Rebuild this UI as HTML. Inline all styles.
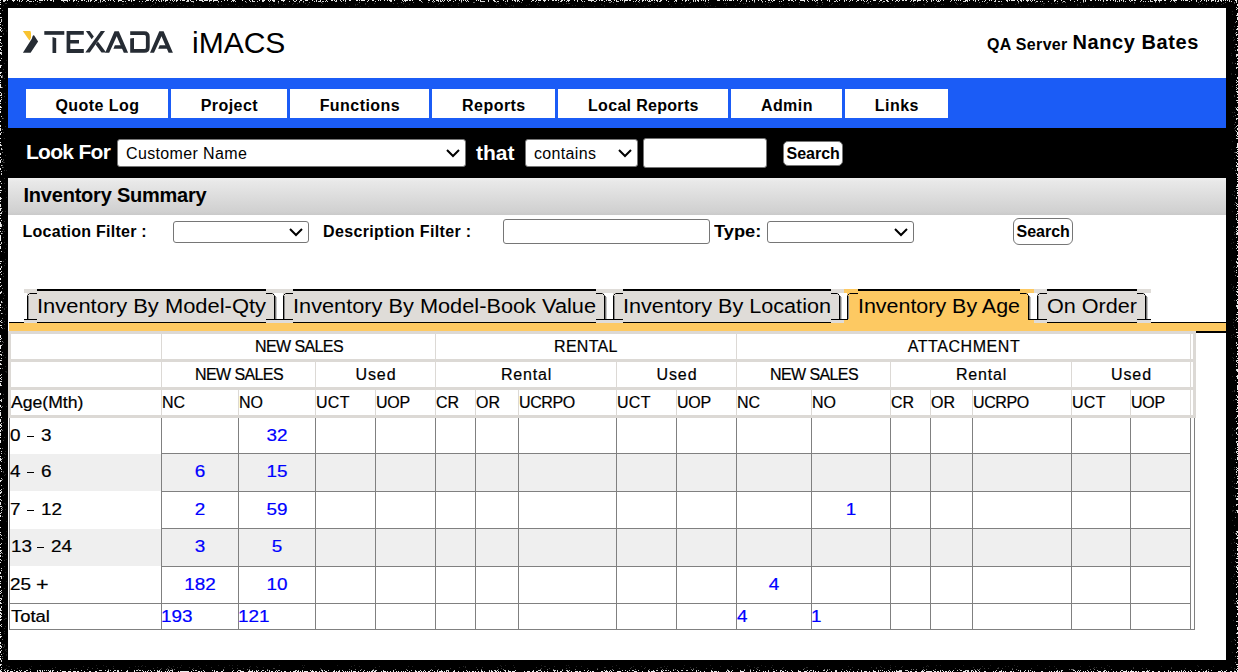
<!DOCTYPE html>
<html><head><meta charset="utf-8"><title>iMACS Inventory Summary</title><style>html,body{margin:0;padding:0;width:1238px;height:672px;overflow:hidden;background:#000;position:relative}
.a{position:absolute}
.t{position:absolute;white-space:nowrap;font-family:"Liberation Sans",sans-serif}
.s{-webkit-text-stroke:0.2px currentColor}
svg{position:absolute;left:0;top:0}
</style></head>
<body>
<div class="a" style="left:8px;top:8px;width:1218px;height:652px;background:#fff;"></div>
<div class="t" style="left:192px;top:27.61px;font-size:30px;line-height:30px;font-weight:400;color:#000;">iMACS</div>
<div class="t" style="left:987px;top:37.26px;font-size:16px;line-height:16px;font-weight:700;color:#000;letter-spacing:0.33px;">QA Server</div>
<div class="t" style="left:1072.5px;top:31.87px;font-size:20px;line-height:20px;font-weight:700;color:#000;letter-spacing:0.58px;">Nancy Bates</div>
<div class="a" style="left:8px;top:78px;width:1218px;height:50px;background:#1b5cf6;"></div>
<div class="a" style="left:26px;top:89px;width:142px;height:29px;background:#fff;"></div>
<div class="t" style="left:-102.6px;width:400px;text-align:center;top:98.06px;font-size:16px;line-height:16px;font-weight:700;color:#000;letter-spacing:0.45px;">Quote Log</div>
<div class="a" style="left:171px;top:89px;width:116px;height:29px;background:#fff;"></div>
<div class="t" style="left:29.400000000000006px;width:400px;text-align:center;top:98.06px;font-size:16px;line-height:16px;font-weight:700;color:#000;letter-spacing:0.45px;">Project</div>
<div class="a" style="left:290px;top:89px;width:139px;height:29px;background:#fff;"></div>
<div class="t" style="left:159.89999999999998px;width:400px;text-align:center;top:98.06px;font-size:16px;line-height:16px;font-weight:700;color:#000;letter-spacing:0.45px;">Functions</div>
<div class="a" style="left:432px;top:89px;width:123px;height:29px;background:#fff;"></div>
<div class="t" style="left:293.9px;width:400px;text-align:center;top:98.06px;font-size:16px;line-height:16px;font-weight:700;color:#000;letter-spacing:0.45px;">Reports</div>
<div class="a" style="left:558px;top:89px;width:170px;height:29px;background:#fff;"></div>
<div class="t" style="left:443.4px;width:400px;text-align:center;top:98.06px;font-size:16px;line-height:16px;font-weight:700;color:#000;letter-spacing:0.31px;">Local Reports</div>
<div class="a" style="left:731px;top:89px;width:111px;height:29px;background:#fff;"></div>
<div class="t" style="left:586.9px;width:400px;text-align:center;top:98.06px;font-size:16px;line-height:16px;font-weight:700;color:#000;letter-spacing:0.45px;">Admin</div>
<div class="a" style="left:845px;top:89px;width:103px;height:29px;background:#fff;"></div>
<div class="t" style="left:696.9px;width:400px;text-align:center;top:98.06px;font-size:16px;line-height:16px;font-weight:700;color:#000;letter-spacing:0.45px;">Links</div>
<div class="a" style="left:8px;top:128px;width:1218px;height:50px;background:#000;"></div>
<div class="t" style="left:26px;top:140.72px;font-size:21px;line-height:21px;font-weight:700;color:#fff;letter-spacing:-0.71px;">Look For</div>
<div class="a" style="left:117px;top:139px;width:347px;height:26px;background:#fff;border:1px solid #767676;border-radius:3px"></div>
<div class="t" style="left:126px;top:146.46px;font-size:16px;line-height:16px;font-weight:400;color:#000;letter-spacing:0.36px;">Customer Name</div>
<div class="t" style="left:476px;top:142.02px;font-size:21px;line-height:21px;font-weight:700;color:#fff;">that</div>
<div class="a" style="left:525px;top:139px;width:111px;height:26px;background:#fff;border:1px solid #767676;border-radius:3px"></div>
<div class="t" style="left:534px;top:146.46px;font-size:16px;line-height:16px;font-weight:400;color:#000;letter-spacing:0.34px;">contains</div>
<div class="a" style="left:643px;top:138px;width:122px;height:28px;background:#fff;border:1px solid #767676;border-radius:3px"></div>
<div class="a" style="left:783px;top:141px;width:58px;height:23px;background:#fff;border:1px solid #767676;border-radius:5px"></div>
<div class="t" style="left:786.5px;top:145.96px;font-size:16px;line-height:16px;font-weight:700;color:#000;">Search</div>
<div class="a" style="left:8px;top:178px;width:1218px;height:37px;background:linear-gradient(#f1f1f1 0px,#e9e9e9 3px,#d0d0d0 34px,#c9c9c9 37px)"></div>
<div class="t" style="left:23.5px;top:185.27px;font-size:20px;line-height:20px;font-weight:700;color:#000;letter-spacing:-0.22px;">Inventory Summary</div>
<div class="t" style="left:22.5px;top:224.46px;font-size:16px;line-height:16px;font-weight:700;color:#000;letter-spacing:0.26px;">Location Filter :</div>
<div class="a" style="left:173px;top:221px;width:134px;height:20px;background:#fff;border:1px solid #767676;border-radius:3px"></div>
<div class="t" style="left:323px;top:224.46px;font-size:16px;line-height:16px;font-weight:700;color:#000;letter-spacing:0.36px;">Description Filter :</div>
<div class="a" style="left:503px;top:219px;width:205px;height:23px;background:#fff;border:1px solid #767676;border-radius:3px"></div>
<div class="t" style="left:713.5px;top:224.46px;font-size:16px;line-height:16px;font-weight:700;color:#000;transform:scaleX(1.14);transform-origin:0 0;">Type:</div>
<div class="a" style="left:767px;top:221px;width:145px;height:20px;background:#fff;border:1px solid #767676;border-radius:3px"></div>
<div class="a" style="left:1013px;top:218px;width:58px;height:25px;background:#fff;border:1px solid #767676;border-radius:6px"></div>
<div class="t" style="left:1016.5px;top:224.26px;font-size:16px;line-height:16px;font-weight:700;color:#000;">Search</div>
<div class="a" style="left:9px;top:322px;width:1217px;height:1px;background:#000;"></div>
<div class="a" style="left:9px;top:323px;width:1217px;height:8px;background:#fdc962;"></div>
<div class="a" style="left:37px;top:289px;width:229px;height:33px;background:#dfdcd8;"></div>
<div class="a" style="left:37px;top:289px;width:229px;height:2px;background:#000;"></div>
<div class="a" style="left:24px;top:289px;width:13px;height:4px;background:#dfdcd8;"></div>
<div class="a" style="left:27px;top:293px;width:10px;height:27px;background:#dfdcd8;"></div>
<div class="a" style="left:24px;top:319px;width:13px;height:4px;background:#dfdcd8;"></div>
<div class="a" style="left:266px;top:289px;width:14px;height:4px;background:#dfdcd8;"></div>
<div class="a" style="left:266px;top:293px;width:8px;height:27px;background:#dfdcd8;"></div>
<div class="a" style="left:266px;top:319px;width:14px;height:4px;background:#dfdcd8;"></div>
<div class="a" style="left:275px;top:296px;width:1px;height:23px;background:#7a7a7a;"></div>
<div class="a" style="left:276px;top:297px;width:1px;height:22px;background:#c4c4c4;"></div>
<div class="a" style="left:30px;top:293px;width:7px;height:1px;background:#000;"></div>
<div class="a" style="left:29px;top:293px;width:1px;height:1px;background:#555;"></div>
<div class="a" style="left:28px;top:294px;width:1px;height:1px;background:#000;"></div>
<div class="a" style="left:27px;top:295px;width:1px;height:1px;background:#555;"></div>
<div class="a" style="left:27px;top:296px;width:1px;height:23px;background:#000;"></div>
<div class="a" style="left:28px;top:296px;width:1px;height:23px;background:#8a8a8a;"></div>
<div class="a" style="left:24px;top:319px;width:13px;height:1px;background:#000;"></div>
<div class="a" style="left:266px;top:293px;width:6px;height:1px;background:#000;"></div>
<div class="a" style="left:272px;top:293px;width:1px;height:1px;background:#555;"></div>
<div class="a" style="left:273px;top:294px;width:1px;height:1px;background:#000;"></div>
<div class="a" style="left:274px;top:295px;width:1px;height:1px;background:#555;"></div>
<div class="a" style="left:274px;top:296px;width:1px;height:23px;background:#000;"></div>
<div class="a" style="left:266px;top:319px;width:14px;height:1px;background:#000;"></div>
<div class="t" style="left:37px;top:296.37px;font-size:20px;line-height:20px;font-weight:400;color:#000;transform:scaleX(1.0958510791022635);transform-origin:0 0;">Inventory By Model-Qty</div>
<div class="a" style="left:293px;top:289px;width:303px;height:33px;background:#dfdcd8;"></div>
<div class="a" style="left:293px;top:289px;width:303px;height:2px;background:#000;"></div>
<div class="a" style="left:280px;top:289px;width:13px;height:4px;background:#dfdcd8;"></div>
<div class="a" style="left:283px;top:293px;width:10px;height:27px;background:#dfdcd8;"></div>
<div class="a" style="left:280px;top:319px;width:13px;height:4px;background:#dfdcd8;"></div>
<div class="a" style="left:596px;top:289px;width:14px;height:4px;background:#dfdcd8;"></div>
<div class="a" style="left:596px;top:293px;width:8px;height:27px;background:#dfdcd8;"></div>
<div class="a" style="left:596px;top:319px;width:14px;height:4px;background:#dfdcd8;"></div>
<div class="a" style="left:605px;top:296px;width:1px;height:23px;background:#7a7a7a;"></div>
<div class="a" style="left:606px;top:297px;width:1px;height:22px;background:#c4c4c4;"></div>
<div class="a" style="left:286px;top:293px;width:7px;height:1px;background:#000;"></div>
<div class="a" style="left:285px;top:293px;width:1px;height:1px;background:#555;"></div>
<div class="a" style="left:284px;top:294px;width:1px;height:1px;background:#000;"></div>
<div class="a" style="left:283px;top:295px;width:1px;height:1px;background:#555;"></div>
<div class="a" style="left:283px;top:296px;width:1px;height:23px;background:#000;"></div>
<div class="a" style="left:284px;top:296px;width:1px;height:23px;background:#8a8a8a;"></div>
<div class="a" style="left:280px;top:319px;width:13px;height:1px;background:#000;"></div>
<div class="a" style="left:596px;top:293px;width:6px;height:1px;background:#000;"></div>
<div class="a" style="left:602px;top:293px;width:1px;height:1px;background:#555;"></div>
<div class="a" style="left:603px;top:294px;width:1px;height:1px;background:#000;"></div>
<div class="a" style="left:604px;top:295px;width:1px;height:1px;background:#555;"></div>
<div class="a" style="left:604px;top:296px;width:1px;height:23px;background:#000;"></div>
<div class="a" style="left:596px;top:319px;width:14px;height:1px;background:#000;"></div>
<div class="t" style="left:293px;top:296.37px;font-size:20px;line-height:20px;font-weight:400;color:#000;transform:scaleX(1.0873075680912907);transform-origin:0 0;">Inventory By Model-Book Value</div>
<div class="a" style="left:623px;top:289px;width:208px;height:33px;background:#dfdcd8;"></div>
<div class="a" style="left:623px;top:289px;width:208px;height:2px;background:#000;"></div>
<div class="a" style="left:610px;top:289px;width:13px;height:4px;background:#dfdcd8;"></div>
<div class="a" style="left:613px;top:293px;width:10px;height:27px;background:#dfdcd8;"></div>
<div class="a" style="left:610px;top:319px;width:13px;height:4px;background:#dfdcd8;"></div>
<div class="a" style="left:831px;top:289px;width:13px;height:4px;background:#dfdcd8;"></div>
<div class="a" style="left:831px;top:293px;width:8px;height:27px;background:#dfdcd8;"></div>
<div class="a" style="left:831px;top:319px;width:13px;height:4px;background:#dfdcd8;"></div>
<div class="a" style="left:840px;top:296px;width:1px;height:23px;background:#7a7a7a;"></div>
<div class="a" style="left:841px;top:297px;width:1px;height:22px;background:#c4c4c4;"></div>
<div class="a" style="left:616px;top:293px;width:7px;height:1px;background:#000;"></div>
<div class="a" style="left:615px;top:293px;width:1px;height:1px;background:#555;"></div>
<div class="a" style="left:614px;top:294px;width:1px;height:1px;background:#000;"></div>
<div class="a" style="left:613px;top:295px;width:1px;height:1px;background:#555;"></div>
<div class="a" style="left:613px;top:296px;width:1px;height:23px;background:#000;"></div>
<div class="a" style="left:614px;top:296px;width:1px;height:23px;background:#8a8a8a;"></div>
<div class="a" style="left:610px;top:319px;width:13px;height:1px;background:#000;"></div>
<div class="a" style="left:831px;top:293px;width:6px;height:1px;background:#000;"></div>
<div class="a" style="left:837px;top:293px;width:1px;height:1px;background:#555;"></div>
<div class="a" style="left:838px;top:294px;width:1px;height:1px;background:#000;"></div>
<div class="a" style="left:839px;top:295px;width:1px;height:1px;background:#555;"></div>
<div class="a" style="left:839px;top:296px;width:1px;height:23px;background:#000;"></div>
<div class="a" style="left:831px;top:319px;width:13px;height:1px;background:#000;"></div>
<div class="t" style="left:623px;top:296.37px;font-size:20px;line-height:20px;font-weight:400;color:#000;transform:scaleX(1.0814183217219506);transform-origin:0 0;">Inventory By Location</div>
<div class="a" style="left:858px;top:289px;width:162px;height:34px;background:#fdc962;"></div>
<div class="a" style="left:858px;top:289px;width:162px;height:2px;background:#000;"></div>
<div class="a" style="left:844px;top:289px;width:14px;height:4px;background:#fdc962;"></div>
<div class="a" style="left:847px;top:293px;width:11px;height:27px;background:#fdc962;"></div>
<div class="a" style="left:844px;top:319px;width:14px;height:4px;background:#fdc962;"></div>
<div class="a" style="left:1020px;top:289px;width:14px;height:4px;background:#fdc962;"></div>
<div class="a" style="left:1020px;top:293px;width:8px;height:27px;background:#fdc962;"></div>
<div class="a" style="left:1020px;top:319px;width:14px;height:4px;background:#fdc962;"></div>
<div class="a" style="left:1029px;top:296px;width:1px;height:23px;background:#7a7a7a;"></div>
<div class="a" style="left:1030px;top:297px;width:1px;height:22px;background:#c4c4c4;"></div>
<div class="a" style="left:850px;top:293px;width:8px;height:1px;background:#000;"></div>
<div class="a" style="left:849px;top:293px;width:1px;height:1px;background:#555;"></div>
<div class="a" style="left:848px;top:294px;width:1px;height:1px;background:#000;"></div>
<div class="a" style="left:847px;top:295px;width:1px;height:1px;background:#555;"></div>
<div class="a" style="left:847px;top:296px;width:1px;height:23px;background:#000;"></div>
<div class="a" style="left:848px;top:296px;width:1px;height:23px;background:#8a8a8a;"></div>
<div class="a" style="left:844px;top:319px;width:4px;height:1px;background:#000;"></div>
<div class="a" style="left:1020px;top:293px;width:6px;height:1px;background:#000;"></div>
<div class="a" style="left:1026px;top:293px;width:1px;height:1px;background:#555;"></div>
<div class="a" style="left:1027px;top:294px;width:1px;height:1px;background:#000;"></div>
<div class="a" style="left:1028px;top:295px;width:1px;height:1px;background:#555;"></div>
<div class="a" style="left:1028px;top:296px;width:1px;height:23px;background:#000;"></div>
<div class="a" style="left:1028px;top:319px;width:6px;height:1px;background:#000;"></div>
<div class="t" style="left:858px;top:296.37px;font-size:20px;line-height:20px;font-weight:400;color:#000;transform:scaleX(1.0714285714285716);transform-origin:0 0;">Inventory By Age</div>
<div class="a" style="left:1047px;top:289px;width:90px;height:33px;background:#dfdcd8;"></div>
<div class="a" style="left:1047px;top:289px;width:90px;height:2px;background:#000;"></div>
<div class="a" style="left:1034px;top:289px;width:13px;height:4px;background:#dfdcd8;"></div>
<div class="a" style="left:1037px;top:293px;width:10px;height:27px;background:#dfdcd8;"></div>
<div class="a" style="left:1034px;top:319px;width:13px;height:4px;background:#dfdcd8;"></div>
<div class="a" style="left:1137px;top:289px;width:14px;height:4px;background:#dfdcd8;"></div>
<div class="a" style="left:1137px;top:293px;width:8px;height:27px;background:#dfdcd8;"></div>
<div class="a" style="left:1137px;top:319px;width:14px;height:4px;background:#dfdcd8;"></div>
<div class="a" style="left:1146px;top:296px;width:1px;height:23px;background:#7a7a7a;"></div>
<div class="a" style="left:1147px;top:297px;width:1px;height:22px;background:#c4c4c4;"></div>
<div class="a" style="left:1040px;top:293px;width:7px;height:1px;background:#000;"></div>
<div class="a" style="left:1039px;top:293px;width:1px;height:1px;background:#555;"></div>
<div class="a" style="left:1038px;top:294px;width:1px;height:1px;background:#000;"></div>
<div class="a" style="left:1037px;top:295px;width:1px;height:1px;background:#555;"></div>
<div class="a" style="left:1037px;top:296px;width:1px;height:23px;background:#000;"></div>
<div class="a" style="left:1038px;top:296px;width:1px;height:23px;background:#8a8a8a;"></div>
<div class="a" style="left:1034px;top:319px;width:13px;height:1px;background:#000;"></div>
<div class="a" style="left:1137px;top:293px;width:6px;height:1px;background:#000;"></div>
<div class="a" style="left:1143px;top:293px;width:1px;height:1px;background:#555;"></div>
<div class="a" style="left:1144px;top:294px;width:1px;height:1px;background:#000;"></div>
<div class="a" style="left:1145px;top:295px;width:1px;height:1px;background:#555;"></div>
<div class="a" style="left:1145px;top:296px;width:1px;height:23px;background:#000;"></div>
<div class="a" style="left:1137px;top:319px;width:14px;height:1px;background:#000;"></div>
<div class="t" style="left:1047px;top:296.37px;font-size:20px;line-height:20px;font-weight:400;color:#000;transform:scaleX(1.079654510556622);transform-origin:0 0;">On Order</div>
<div class="a" style="left:8px;top:331px;width:1188px;height:3px;background:#dcd9d5;"></div>
<div class="a" style="left:8px;top:331px;width:3px;height:86px;background:#dcd9d5;"></div>
<div class="a" style="left:1193px;top:331px;width:3px;height:86px;background:#dcd9d5;"></div>
<div class="a" style="left:1196px;top:331px;width:30px;height:2px;background:#000;"></div>
<div class="a" style="left:8px;top:359px;width:1188px;height:3px;background:#dcd9d5;"></div>
<div class="a" style="left:8px;top:387px;width:1188px;height:3px;background:#dcd9d5;"></div>
<div class="a" style="left:8px;top:415px;width:1188px;height:3px;background:#dcd9d5;"></div>
<div class="a" style="left:161px;top:334px;width:1px;height:25px;background:#dcd9d5;"></div>
<div class="a" style="left:435px;top:334px;width:1px;height:25px;background:#dcd9d5;"></div>
<div class="a" style="left:736px;top:334px;width:1px;height:25px;background:#dcd9d5;"></div>
<div class="a" style="left:161px;top:362px;width:1px;height:25px;background:#dcd9d5;"></div>
<div class="a" style="left:315px;top:362px;width:1px;height:25px;background:#dcd9d5;"></div>
<div class="a" style="left:435px;top:362px;width:1px;height:25px;background:#dcd9d5;"></div>
<div class="a" style="left:616px;top:362px;width:1px;height:25px;background:#dcd9d5;"></div>
<div class="a" style="left:736px;top:362px;width:1px;height:25px;background:#dcd9d5;"></div>
<div class="a" style="left:890px;top:362px;width:1px;height:25px;background:#dcd9d5;"></div>
<div class="a" style="left:1071px;top:362px;width:1px;height:25px;background:#dcd9d5;"></div>
<div class="a" style="left:161px;top:390px;width:1px;height:25px;background:#dcd9d5;"></div>
<div class="a" style="left:238px;top:390px;width:1px;height:25px;background:#dcd9d5;"></div>
<div class="a" style="left:315px;top:390px;width:1px;height:25px;background:#dcd9d5;"></div>
<div class="a" style="left:375px;top:390px;width:1px;height:25px;background:#dcd9d5;"></div>
<div class="a" style="left:435px;top:390px;width:1px;height:25px;background:#dcd9d5;"></div>
<div class="a" style="left:475px;top:390px;width:1px;height:25px;background:#dcd9d5;"></div>
<div class="a" style="left:518px;top:390px;width:1px;height:25px;background:#dcd9d5;"></div>
<div class="a" style="left:616px;top:390px;width:1px;height:25px;background:#dcd9d5;"></div>
<div class="a" style="left:676px;top:390px;width:1px;height:25px;background:#dcd9d5;"></div>
<div class="a" style="left:736px;top:390px;width:1px;height:25px;background:#dcd9d5;"></div>
<div class="a" style="left:811px;top:390px;width:1px;height:25px;background:#dcd9d5;"></div>
<div class="a" style="left:890px;top:390px;width:1px;height:25px;background:#dcd9d5;"></div>
<div class="a" style="left:930px;top:390px;width:1px;height:25px;background:#dcd9d5;"></div>
<div class="a" style="left:972px;top:390px;width:1px;height:25px;background:#dcd9d5;"></div>
<div class="a" style="left:1071px;top:390px;width:1px;height:25px;background:#dcd9d5;"></div>
<div class="a" style="left:1130px;top:390px;width:1px;height:25px;background:#dcd9d5;"></div>
<div class="a" style="left:1190px;top:390px;width:1px;height:25px;background:#dcd9d5;"></div>
<div class="a" style="left:1190px;top:334px;width:1px;height:81px;background:#dcd9d5;"></div>
<div class="t s" style="left:99.0px;width:400px;text-align:center;top:339.36px;font-size:16px;line-height:16px;font-weight:400;color:#000;letter-spacing:-0.6px;">NEW SALES</div>
<div class="t s" style="left:385.9px;width:400px;text-align:center;top:339.36px;font-size:16px;line-height:16px;font-weight:400;color:#000;letter-spacing:0.28px;">RENTAL</div>
<div class="t s" style="left:764.0px;width:400px;text-align:center;top:339.36px;font-size:16px;line-height:16px;font-weight:400;color:#000;letter-spacing:0.56px;">ATTACHMENT</div>
<div class="t s" style="left:39.0px;width:400px;text-align:center;top:367.26px;font-size:16px;line-height:16px;font-weight:400;color:#000;letter-spacing:-0.6px;">NEW SALES</div>
<div class="t s" style="left:176.0px;width:400px;text-align:center;top:367.26px;font-size:16px;line-height:16px;font-weight:400;color:#000;letter-spacing:0.9px;">Used</div>
<div class="t s" style="left:326.5px;width:400px;text-align:center;top:367.26px;font-size:16px;line-height:16px;font-weight:400;color:#000;letter-spacing:0.82px;">Rental</div>
<div class="t s" style="left:477.0px;width:400px;text-align:center;top:367.26px;font-size:16px;line-height:16px;font-weight:400;color:#000;letter-spacing:0.9px;">Used</div>
<div class="t s" style="left:614.0px;width:400px;text-align:center;top:367.26px;font-size:16px;line-height:16px;font-weight:400;color:#000;letter-spacing:-0.6px;">NEW SALES</div>
<div class="t s" style="left:781.5px;width:400px;text-align:center;top:367.26px;font-size:16px;line-height:16px;font-weight:400;color:#000;letter-spacing:0.82px;">Rental</div>
<div class="t s" style="left:931.5px;width:400px;text-align:center;top:367.26px;font-size:16px;line-height:16px;font-weight:400;color:#000;letter-spacing:0.9px;">Used</div>
<div class="t s" style="left:10.5px;top:395.26px;font-size:16px;line-height:16px;font-weight:400;color:#000;transform:scaleX(1.1);transform-origin:0 0;">Age(Mth)</div>
<div class="t s" style="left:162px;top:395.26px;font-size:16px;line-height:16px;font-weight:400;color:#000;">NC</div>
<div class="t s" style="left:239px;top:395.26px;font-size:16px;line-height:16px;font-weight:400;color:#000;">NO</div>
<div class="t s" style="left:316px;top:395.26px;font-size:16px;line-height:16px;font-weight:400;color:#000;letter-spacing:0.3px;">UCT</div>
<div class="t s" style="left:376px;top:395.26px;font-size:16px;line-height:16px;font-weight:400;color:#000;letter-spacing:-0.25px;">UOP</div>
<div class="t s" style="left:436px;top:395.26px;font-size:16px;line-height:16px;font-weight:400;color:#000;">CR</div>
<div class="t s" style="left:476px;top:395.26px;font-size:16px;line-height:16px;font-weight:400;color:#000;">OR</div>
<div class="t s" style="left:519px;top:395.26px;font-size:16px;line-height:16px;font-weight:400;color:#000;letter-spacing:-0.4px;">UCRPO</div>
<div class="t s" style="left:617px;top:395.26px;font-size:16px;line-height:16px;font-weight:400;color:#000;letter-spacing:0.3px;">UCT</div>
<div class="t s" style="left:677px;top:395.26px;font-size:16px;line-height:16px;font-weight:400;color:#000;letter-spacing:-0.25px;">UOP</div>
<div class="t s" style="left:737px;top:395.26px;font-size:16px;line-height:16px;font-weight:400;color:#000;">NC</div>
<div class="t s" style="left:812px;top:395.26px;font-size:16px;line-height:16px;font-weight:400;color:#000;">NO</div>
<div class="t s" style="left:891px;top:395.26px;font-size:16px;line-height:16px;font-weight:400;color:#000;">CR</div>
<div class="t s" style="left:931px;top:395.26px;font-size:16px;line-height:16px;font-weight:400;color:#000;">OR</div>
<div class="t s" style="left:973px;top:395.26px;font-size:16px;line-height:16px;font-weight:400;color:#000;letter-spacing:-0.4px;">UCRPO</div>
<div class="t s" style="left:1072px;top:395.26px;font-size:16px;line-height:16px;font-weight:400;color:#000;letter-spacing:0.3px;">UCT</div>
<div class="t s" style="left:1131px;top:395.26px;font-size:16px;line-height:16px;font-weight:400;color:#000;letter-spacing:-0.25px;">UOP</div>
<div class="t s" style="left:9.8px;top:427.96px;font-size:16px;line-height:16px;font-weight:400;color:#000;transform:scaleX(1.18);transform-origin:0 0;">0</div>
<div class="a" style="left:27.3px;top:435.5px;width:7px;height:1.1px;background:#000;"></div>
<div class="t s" style="left:40.6px;top:427.96px;font-size:16px;line-height:16px;font-weight:400;color:#000;transform:scaleX(1.18);transform-origin:0 0;">3</div>
<div class="t s" style="left:76.5px;width:400px;text-align:center;top:427.96px;font-size:16px;line-height:16px;font-weight:400;color:#0000ff;transform:scaleX(1.18);transform-origin:50% 0;">32</div>
<div class="a" style="left:10px;top:454px;width:1180px;height:37px;background:#efefef;"></div>
<div class="t s" style="left:9.8px;top:463.96px;font-size:16px;line-height:16px;font-weight:400;color:#000;transform:scaleX(1.18);transform-origin:0 0;">4</div>
<div class="a" style="left:27.3px;top:471.5px;width:7px;height:1.1px;background:#000;"></div>
<div class="t s" style="left:40.6px;top:463.96px;font-size:16px;line-height:16px;font-weight:400;color:#000;transform:scaleX(1.18);transform-origin:0 0;">6</div>
<div class="t s" style="left:-0.5px;width:400px;text-align:center;top:463.96px;font-size:16px;line-height:16px;font-weight:400;color:#0000ff;transform:scaleX(1.18);transform-origin:50% 0;">6</div>
<div class="t s" style="left:76.5px;width:400px;text-align:center;top:463.96px;font-size:16px;line-height:16px;font-weight:400;color:#0000ff;transform:scaleX(1.18);transform-origin:50% 0;">15</div>
<div class="t s" style="left:9.8px;top:501.96px;font-size:16px;line-height:16px;font-weight:400;color:#000;transform:scaleX(1.18);transform-origin:0 0;">7</div>
<div class="a" style="left:27.3px;top:509.5px;width:7px;height:1.1px;background:#000;"></div>
<div class="t s" style="left:41.2px;top:501.96px;font-size:16px;line-height:16px;font-weight:400;color:#000;transform:scaleX(1.18);transform-origin:0 0;">12</div>
<div class="t s" style="left:-0.5px;width:400px;text-align:center;top:501.96px;font-size:16px;line-height:16px;font-weight:400;color:#0000ff;transform:scaleX(1.18);transform-origin:50% 0;">2</div>
<div class="t s" style="left:76.5px;width:400px;text-align:center;top:501.96px;font-size:16px;line-height:16px;font-weight:400;color:#0000ff;transform:scaleX(1.18);transform-origin:50% 0;">59</div>
<div class="t s" style="left:650.5px;width:400px;text-align:center;top:501.96px;font-size:16px;line-height:16px;font-weight:400;color:#0000ff;transform:scaleX(1.18);transform-origin:50% 0;">1</div>
<div class="a" style="left:10px;top:529px;width:1180px;height:37px;background:#efefef;"></div>
<div class="t s" style="left:10.8px;top:538.96px;font-size:16px;line-height:16px;font-weight:400;color:#000;transform:scaleX(1.18);transform-origin:0 0;">13</div>
<div class="a" style="left:37.1px;top:546.5px;width:7px;height:1.1px;background:#000;"></div>
<div class="t s" style="left:50.8px;top:538.96px;font-size:16px;line-height:16px;font-weight:400;color:#000;transform:scaleX(1.18);transform-origin:0 0;">24</div>
<div class="t s" style="left:-0.5px;width:400px;text-align:center;top:538.96px;font-size:16px;line-height:16px;font-weight:400;color:#0000ff;transform:scaleX(1.18);transform-origin:50% 0;">3</div>
<div class="t s" style="left:76.5px;width:400px;text-align:center;top:538.96px;font-size:16px;line-height:16px;font-weight:400;color:#0000ff;transform:scaleX(1.18);transform-origin:50% 0;">5</div>
<div class="t s" style="left:9.8px;top:576.96px;font-size:16px;line-height:16px;font-weight:400;color:#000;transform:scaleX(1.18);transform-origin:0 0;">25</div>
<div class="t s" style="left:36.3px;top:576.06px;font-size:18px;line-height:18px;font-weight:400;color:#000;transform:scaleX(1.2);transform-origin:0 0;">+</div>
<div class="t s" style="left:-0.5px;width:400px;text-align:center;top:576.96px;font-size:16px;line-height:16px;font-weight:400;color:#0000ff;transform:scaleX(1.18);transform-origin:50% 0;">182</div>
<div class="t s" style="left:76.5px;width:400px;text-align:center;top:576.96px;font-size:16px;line-height:16px;font-weight:400;color:#0000ff;transform:scaleX(1.18);transform-origin:50% 0;">10</div>
<div class="t s" style="left:573.5px;width:400px;text-align:center;top:576.96px;font-size:16px;line-height:16px;font-weight:400;color:#0000ff;transform:scaleX(1.18);transform-origin:50% 0;">4</div>
<div class="a" style="left:161px;top:453px;width:1030px;height:1px;background:#808080;"></div>
<div class="a" style="left:161px;top:491px;width:1030px;height:1px;background:#808080;"></div>
<div class="a" style="left:161px;top:528px;width:1030px;height:1px;background:#808080;"></div>
<div class="a" style="left:161px;top:566px;width:1030px;height:1px;background:#808080;"></div>
<div class="a" style="left:9px;top:603px;width:1182px;height:1px;background:#808080;"></div>
<div class="a" style="left:9px;top:629px;width:1186px;height:1px;background:#808080;"></div>
<div class="a" style="left:9px;top:418px;width:1px;height:212px;background:#808080;"></div>
<div class="a" style="left:161px;top:418px;width:1px;height:212px;background:#808080;"></div>
<div class="a" style="left:238px;top:418px;width:1px;height:212px;background:#808080;"></div>
<div class="a" style="left:315px;top:418px;width:1px;height:212px;background:#808080;"></div>
<div class="a" style="left:375px;top:418px;width:1px;height:212px;background:#808080;"></div>
<div class="a" style="left:435px;top:418px;width:1px;height:212px;background:#808080;"></div>
<div class="a" style="left:475px;top:418px;width:1px;height:212px;background:#808080;"></div>
<div class="a" style="left:518px;top:418px;width:1px;height:212px;background:#808080;"></div>
<div class="a" style="left:616px;top:418px;width:1px;height:212px;background:#808080;"></div>
<div class="a" style="left:676px;top:418px;width:1px;height:212px;background:#808080;"></div>
<div class="a" style="left:736px;top:418px;width:1px;height:212px;background:#808080;"></div>
<div class="a" style="left:811px;top:418px;width:1px;height:212px;background:#808080;"></div>
<div class="a" style="left:890px;top:418px;width:1px;height:212px;background:#808080;"></div>
<div class="a" style="left:930px;top:418px;width:1px;height:212px;background:#808080;"></div>
<div class="a" style="left:972px;top:418px;width:1px;height:212px;background:#808080;"></div>
<div class="a" style="left:1071px;top:418px;width:1px;height:212px;background:#808080;"></div>
<div class="a" style="left:1130px;top:418px;width:1px;height:212px;background:#808080;"></div>
<div class="a" style="left:1190px;top:418px;width:1px;height:212px;background:#808080;"></div>
<div class="a" style="left:1194px;top:418px;width:1px;height:212px;background:#808080;"></div>
<div class="t s" style="left:10.5px;top:608.76px;font-size:16px;line-height:16px;font-weight:400;color:#000;transform:scaleX(1.15);transform-origin:0 0;">Total</div>
<div class="t s" style="left:160.8px;top:608.76px;font-size:16px;line-height:16px;font-weight:400;color:#0000ff;transform:scaleX(1.18);transform-origin:0 0;">193</div>
<div class="t s" style="left:237.8px;top:608.76px;font-size:16px;line-height:16px;font-weight:400;color:#0000ff;transform:scaleX(1.18);transform-origin:0 0;">121</div>
<div class="t s" style="left:737.3px;top:608.76px;font-size:16px;line-height:16px;font-weight:400;color:#0000ff;transform:scaleX(1.18);transform-origin:0 0;">4</div>
<div class="t s" style="left:811.3px;top:608.76px;font-size:16px;line-height:16px;font-weight:400;color:#0000ff;transform:scaleX(1.18);transform-origin:0 0;">1</div>
<svg width="1238" height="672" viewBox="0 0 1238 672"><polygon fill="#f8c330" points="22.8,30.95 30.4,30.95 31.0,33.0 31.0,37.6 30.2,39.6 29.4,40.5"/><path fill="#262c34" d="M22.9,52.8 L31.8,38.8 L32.6,36.3 Q33.2,34.9 34.2,35.6 L38.1,41.6 L30.6,52.8 Z"/><rect fill="#262c34" x="44.3" y="31.1" width="20" height="3.7"/><polygon fill="#262c34" points="52.5,37 56.2,38.2 56.2,52.9 52.5,52.9"/><path fill="#262c34" d="M66.6,31.1 H83.8 V34.8 H70.3 V39.9 H79 V43.5 H70.3 V49 H83.8 V52.9 H66.6 Z"/><polygon fill="#262c34" points="85.9,31.1 89.8,31.1 93.8,36.5 91.7,39.2"/><polygon fill="#262c34" points="100.8,31.1 105,31.1 89.8,52.6 85.3,52.6"/><polygon fill="#262c34" points="95.6,44.6 97.9,41.4 106.2,52.6 101.5,52.6"/><polygon fill="#262c34" points="105.2,52.7 114.5,31.2 118.8,31.2 128.1,52.7 123.8,52.7 116.7,36.2 109.2,52.7"/><polygon fill="#262c34" points="114.9,45.2 121.6,45.2 123.1,48.7 113.4,48.7"/><polygon fill="#262c34" points="150.0,52.7 159.3,31.2 163.6,31.2 172.89999999999998,52.7 168.6,52.7 161.5,36.2 154.0,52.7"/><polygon fill="#262c34" points="159.7,45.2 166.39999999999998,45.2 167.89999999999998,48.7 158.2,48.7"/><path fill="#262c34" fill-rule="evenodd" d="M130.2,31.2 H144.2 Q149.7,31.2 149.7,36.7 V47.2 Q149.7,52.7 144.2,52.7 H130.2 Z M134,35 V48.9 H144.4 Q145.9,48.9 145.9,47.4 V36.5 Q145.9,35 144.4,35 Z"/><polygon fill="#fff" points="130.0,35 134,35 134,37.9 130.0,38.4"/><polyline fill="none" stroke="#000" stroke-width="2" points="447,150.0 453,156.0 459,150.0"/><polyline fill="none" stroke="#000" stroke-width="2" points="619,150.0 625,156.0 631,150.0"/><polyline fill="none" stroke="#000" stroke-width="2" points="290,229.0 296,235.0 302,229.0"/><polyline fill="none" stroke="#000" stroke-width="2" points="895,229.0 901,235.0 907,229.0"/><path fill="rgb(235,235,235)" d="M0 0h1v1h-1zM0 671h1v1h-1zM1 671h1v1h-1zM3 0h1v1h-1zM4 0h1v1h-1zM5 0h1v1h-1zM5 671h1v1h-1zM7 0h1v1h-1zM7 671h1v1h-1zM10 671h1v1h-1zM11 671h1v1h-1zM12 0h1v1h-1zM12 671h1v1h-1zM13 0h1v1h-1zM14 0h1v1h-1zM16 671h1v1h-1zM17 0h1v1h-1zM17 671h1v1h-1zM19 0h1v1h-1zM20 671h1v1h-1zM22 0h1v1h-1zM24 671h1v1h-1zM25 671h1v1h-1zM27 0h1v1h-1zM28 0h1v1h-1zM30 671h1v1h-1zM35 0h1v1h-1zM37 671h1v1h-1zM39 0h1v1h-1zM40 0h1v1h-1zM40 671h1v1h-1zM41 0h1v1h-1zM42 0h1v1h-1zM42 671h1v1h-1zM44 0h1v1h-1zM47 0h1v1h-1zM49 671h1v1h-1zM50 0h1v1h-1zM50 671h1v1h-1zM51 0h1v1h-1zM52 671h1v1h-1zM53 0h1v1h-1zM57 671h1v1h-1zM61 0h1v1h-1zM62 0h1v1h-1zM62 671h1v1h-1zM63 0h1v1h-1zM63 671h1v1h-1zM64 0h1v1h-1zM64 671h1v1h-1zM65 0h1v1h-1zM65 671h1v1h-1zM66 0h1v1h-1zM67 0h1v1h-1zM68 671h1v1h-1zM69 0h1v1h-1zM69 671h1v1h-1zM70 671h1v1h-1zM73 0h1v1h-1zM73 671h1v1h-1zM74 0h1v1h-1zM74 671h1v1h-1zM75 671h1v1h-1zM76 0h1v1h-1zM77 671h1v1h-1zM78 671h1v1h-1zM81 0h1v1h-1zM82 0h1v1h-1zM84 0h1v1h-1zM84 671h1v1h-1zM88 0h1v1h-1zM89 671h1v1h-1zM90 0h1v1h-1zM90 671h1v1h-1zM91 0h1v1h-1zM95 0h1v1h-1zM95 671h1v1h-1zM96 0h1v1h-1zM96 671h1v1h-1zM100 0h1v1h-1zM103 0h1v1h-1zM104 0h1v1h-1zM107 671h1v1h-1zM108 0h1v1h-1zM108 671h1v1h-1zM110 0h1v1h-1zM113 0h1v1h-1zM113 671h1v1h-1zM117 671h1v1h-1zM118 0h1v1h-1zM118 671h1v1h-1zM119 0h1v1h-1zM120 0h1v1h-1zM121 0h1v1h-1zM126 671h1v1h-1zM127 671h1v1h-1zM128 0h1v1h-1zM129 0h1v1h-1zM131 0h1v1h-1zM133 0h1v1h-1zM134 0h1v1h-1zM134 671h1v1h-1zM143 671h1v1h-1zM145 671h1v1h-1zM146 0h1v1h-1zM147 0h1v1h-1zM147 671h1v1h-1zM148 0h1v1h-1zM150 0h1v1h-1zM151 671h1v1h-1zM153 0h1v1h-1zM156 0h1v1h-1zM157 671h1v1h-1zM158 0h1v1h-1zM158 671h1v1h-1zM159 671h1v1h-1zM161 0h1v1h-1zM161 671h1v1h-1zM163 0h1v1h-1zM165 0h1v1h-1zM165 671h1v1h-1zM166 0h1v1h-1zM167 0h1v1h-1zM167 671h1v1h-1zM169 671h1v1h-1zM170 0h1v1h-1zM172 0h1v1h-1zM172 671h1v1h-1zM174 0h1v1h-1zM176 0h1v1h-1zM177 0h1v1h-1zM178 671h1v1h-1zM180 0h1v1h-1zM180 671h1v1h-1zM181 671h1v1h-1zM182 0h1v1h-1zM182 671h1v1h-1zM183 0h1v1h-1zM183 671h1v1h-1zM184 0h1v1h-1zM184 671h1v1h-1zM185 671h1v1h-1zM186 671h1v1h-1zM187 0h1v1h-1zM187 671h1v1h-1zM188 0h1v1h-1zM188 671h1v1h-1zM190 0h1v1h-1zM191 671h1v1h-1zM196 0h1v1h-1zM198 671h1v1h-1zM199 0h1v1h-1zM199 671h1v1h-1zM200 0h1v1h-1zM201 0h1v1h-1zM201 671h1v1h-1zM202 0h1v1h-1zM204 0h1v1h-1zM204 671h1v1h-1zM205 0h1v1h-1zM206 0h1v1h-1zM207 0h1v1h-1zM209 0h1v1h-1zM210 0h1v1h-1zM211 0h1v1h-1zM213 0h1v1h-1zM214 0h1v1h-1zM214 671h1v1h-1zM215 0h1v1h-1zM216 0h1v1h-1zM216 671h1v1h-1zM217 0h1v1h-1zM217 671h1v1h-1zM221 671h1v1h-1zM222 671h1v1h-1zM224 0h1v1h-1zM227 0h1v1h-1zM232 0h1v1h-1zM232 671h1v1h-1zM233 0h1v1h-1zM234 0h1v1h-1zM237 671h1v1h-1zM240 671h1v1h-1zM241 671h1v1h-1zM242 0h1v1h-1zM242 671h1v1h-1zM243 671h1v1h-1zM248 671h1v1h-1zM249 0h1v1h-1zM249 671h1v1h-1zM250 671h1v1h-1zM251 671h1v1h-1zM252 0h1v1h-1zM252 671h1v1h-1zM254 671h1v1h-1zM256 671h1v1h-1zM257 671h1v1h-1zM259 0h1v1h-1zM261 671h1v1h-1zM262 0h1v1h-1zM263 0h1v1h-1zM264 0h1v1h-1zM265 671h1v1h-1zM268 0h1v1h-1zM269 671h1v1h-1zM270 0h1v1h-1zM271 671h1v1h-1zM272 0h1v1h-1zM272 671h1v1h-1zM273 0h1v1h-1zM274 0h1v1h-1zM275 671h1v1h-1zM277 671h1v1h-1zM281 0h1v1h-1zM281 671h1v1h-1zM282 0h1v1h-1zM283 0h1v1h-1zM284 0h1v1h-1zM284 671h1v1h-1zM285 671h1v1h-1zM290 671h1v1h-1zM293 0h1v1h-1zM293 671h1v1h-1zM294 671h1v1h-1zM295 671h1v1h-1zM296 0h1v1h-1zM297 671h1v1h-1zM298 671h1v1h-1zM300 0h1v1h-1zM300 671h1v1h-1zM301 0h1v1h-1zM302 671h1v1h-1zM304 671h1v1h-1zM305 0h1v1h-1zM305 671h1v1h-1zM306 0h1v1h-1zM306 671h1v1h-1zM307 0h1v1h-1zM307 671h1v1h-1zM311 671h1v1h-1zM312 0h1v1h-1zM312 671h1v1h-1zM313 671h1v1h-1zM315 671h1v1h-1zM316 0h1v1h-1zM316 671h1v1h-1zM319 671h1v1h-1zM320 0h1v1h-1zM322 671h1v1h-1zM325 671h1v1h-1zM326 0h1v1h-1zM326 671h1v1h-1zM331 0h1v1h-1zM332 0h1v1h-1zM333 671h1v1h-1zM334 0h1v1h-1zM334 671h1v1h-1zM336 0h1v1h-1zM336 671h1v1h-1zM338 671h1v1h-1zM339 671h1v1h-1zM340 0h1v1h-1zM343 0h1v1h-1zM343 671h1v1h-1zM345 0h1v1h-1zM345 671h1v1h-1zM347 671h1v1h-1zM349 0h1v1h-1zM349 671h1v1h-1zM350 0h1v1h-1zM351 671h1v1h-1zM353 671h1v1h-1zM354 671h1v1h-1zM355 671h1v1h-1zM356 0h1v1h-1zM357 0h1v1h-1zM358 671h1v1h-1zM359 0h1v1h-1zM361 0h1v1h-1zM362 0h1v1h-1zM363 0h1v1h-1zM363 671h1v1h-1zM364 0h1v1h-1zM367 671h1v1h-1zM368 0h1v1h-1zM369 671h1v1h-1zM371 671h1v1h-1zM372 0h1v1h-1zM372 671h1v1h-1zM373 0h1v1h-1zM374 671h1v1h-1zM375 671h1v1h-1zM378 0h1v1h-1zM380 0h1v1h-1zM381 671h1v1h-1zM383 671h1v1h-1zM384 0h1v1h-1zM384 671h1v1h-1zM385 671h1v1h-1zM387 0h1v1h-1zM387 671h1v1h-1zM389 0h1v1h-1zM390 0h1v1h-1zM390 671h1v1h-1zM391 0h1v1h-1zM393 671h1v1h-1zM394 0h1v1h-1zM396 671h1v1h-1zM398 671h1v1h-1zM401 671h1v1h-1zM402 0h1v1h-1zM403 671h1v1h-1zM404 0h1v1h-1zM405 0h1v1h-1zM405 671h1v1h-1zM406 0h1v1h-1zM407 0h1v1h-1zM409 0h1v1h-1zM409 671h1v1h-1zM410 0h1v1h-1zM412 0h1v1h-1zM415 671h1v1h-1zM416 671h1v1h-1zM418 671h1v1h-1zM419 0h1v1h-1zM419 671h1v1h-1zM420 0h1v1h-1zM421 671h1v1h-1zM423 671h1v1h-1zM425 671h1v1h-1zM428 0h1v1h-1zM428 671h1v1h-1zM429 0h1v1h-1zM429 671h1v1h-1zM433 0h1v1h-1zM434 671h1v1h-1zM436 0h1v1h-1zM437 0h1v1h-1zM437 671h1v1h-1zM438 0h1v1h-1zM439 671h1v1h-1zM440 0h1v1h-1zM440 671h1v1h-1zM441 671h1v1h-1zM442 0h1v1h-1zM442 671h1v1h-1zM444 0h1v1h-1zM444 671h1v1h-1zM446 671h1v1h-1zM447 0h1v1h-1zM448 671h1v1h-1zM449 0h1v1h-1zM450 0h1v1h-1zM453 671h1v1h-1zM454 671h1v1h-1zM455 0h1v1h-1zM458 671h1v1h-1zM459 0h1v1h-1zM461 0h1v1h-1zM463 0h1v1h-1zM463 671h1v1h-1zM465 0h1v1h-1zM467 0h1v1h-1zM467 671h1v1h-1zM469 671h1v1h-1zM472 671h1v1h-1zM473 671h1v1h-1zM475 671h1v1h-1zM476 0h1v1h-1zM478 0h1v1h-1zM478 671h1v1h-1zM480 0h1v1h-1zM481 671h1v1h-1zM482 671h1v1h-1zM484 671h1v1h-1zM488 0h1v1h-1zM489 671h1v1h-1zM491 671h1v1h-1zM492 671h1v1h-1zM493 0h1v1h-1zM494 0h1v1h-1zM495 671h1v1h-1zM496 671h1v1h-1zM498 671h1v1h-1zM500 671h1v1h-1zM503 0h1v1h-1zM505 671h1v1h-1zM507 0h1v1h-1zM508 671h1v1h-1zM509 671h1v1h-1zM510 671h1v1h-1zM512 0h1v1h-1zM512 671h1v1h-1zM513 671h1v1h-1zM514 0h1v1h-1zM514 671h1v1h-1zM515 0h1v1h-1zM517 0h1v1h-1zM518 0h1v1h-1zM522 0h1v1h-1zM524 671h1v1h-1zM527 671h1v1h-1zM528 671h1v1h-1zM529 671h1v1h-1zM532 0h1v1h-1zM532 671h1v1h-1zM533 0h1v1h-1zM533 671h1v1h-1zM536 0h1v1h-1zM536 671h1v1h-1zM537 671h1v1h-1zM538 0h1v1h-1zM539 0h1v1h-1zM540 0h1v1h-1zM541 671h1v1h-1zM543 0h1v1h-1zM544 0h1v1h-1zM544 671h1v1h-1zM545 0h1v1h-1zM547 671h1v1h-1zM548 0h1v1h-1zM552 0h1v1h-1zM553 0h1v1h-1zM554 671h1v1h-1zM555 0h1v1h-1zM556 0h1v1h-1zM557 671h1v1h-1zM558 0h1v1h-1zM560 671h1v1h-1zM561 0h1v1h-1zM561 671h1v1h-1zM562 0h1v1h-1zM564 0h1v1h-1zM567 0h1v1h-1zM567 671h1v1h-1zM568 0h1v1h-1zM568 671h1v1h-1zM569 0h1v1h-1zM571 671h1v1h-1zM574 0h1v1h-1zM575 671h1v1h-1zM576 671h1v1h-1zM577 0h1v1h-1zM577 671h1v1h-1zM579 671h1v1h-1zM580 671h1v1h-1zM581 0h1v1h-1zM587 671h1v1h-1zM588 0h1v1h-1zM589 0h1v1h-1zM590 0h1v1h-1zM590 671h1v1h-1zM591 0h1v1h-1zM592 0h1v1h-1zM592 671h1v1h-1zM593 0h1v1h-1zM593 671h1v1h-1zM596 0h1v1h-1zM599 0h1v1h-1zM601 0h1v1h-1zM601 671h1v1h-1zM602 0h1v1h-1zM602 671h1v1h-1zM605 671h1v1h-1zM606 0h1v1h-1zM606 671h1v1h-1zM607 671h1v1h-1zM608 0h1v1h-1zM609 0h1v1h-1zM609 671h1v1h-1zM610 0h1v1h-1zM611 671h1v1h-1zM614 0h1v1h-1zM616 0h1v1h-1zM617 671h1v1h-1zM618 671h1v1h-1zM619 671h1v1h-1zM620 0h1v1h-1zM620 671h1v1h-1zM622 0h1v1h-1zM624 0h1v1h-1zM625 0h1v1h-1zM626 0h1v1h-1zM627 0h1v1h-1zM627 671h1v1h-1zM629 0h1v1h-1zM630 0h1v1h-1zM634 671h1v1h-1zM635 671h1v1h-1zM636 0h1v1h-1zM636 671h1v1h-1zM639 0h1v1h-1zM642 0h1v1h-1zM642 671h1v1h-1zM643 0h1v1h-1zM645 0h1v1h-1zM647 0h1v1h-1zM648 671h1v1h-1zM649 0h1v1h-1zM649 671h1v1h-1zM651 0h1v1h-1zM651 671h1v1h-1zM652 0h1v1h-1zM652 671h1v1h-1zM653 671h1v1h-1zM654 0h1v1h-1zM654 671h1v1h-1zM656 0h1v1h-1zM657 0h1v1h-1zM660 0h1v1h-1zM661 0h1v1h-1zM661 671h1v1h-1zM662 671h1v1h-1zM666 0h1v1h-1zM670 671h1v1h-1zM675 0h1v1h-1zM676 0h1v1h-1zM678 671h1v1h-1zM682 0h1v1h-1zM685 0h1v1h-1zM686 0h1v1h-1zM688 0h1v1h-1zM693 0h1v1h-1zM695 0h1v1h-1zM696 671h1v1h-1zM697 0h1v1h-1zM698 0h1v1h-1zM700 671h1v1h-1zM701 0h1v1h-1zM703 0h1v1h-1zM704 671h1v1h-1zM705 0h1v1h-1zM708 0h1v1h-1zM711 671h1v1h-1zM712 671h1v1h-1zM714 671h1v1h-1zM715 671h1v1h-1zM716 671h1v1h-1zM717 0h1v1h-1zM718 0h1v1h-1zM718 671h1v1h-1zM719 0h1v1h-1zM723 0h1v1h-1zM725 0h1v1h-1zM726 671h1v1h-1zM727 0h1v1h-1zM728 671h1v1h-1zM729 0h1v1h-1zM729 671h1v1h-1zM730 0h1v1h-1zM731 0h1v1h-1zM731 671h1v1h-1zM733 0h1v1h-1zM737 0h1v1h-1zM740 671h1v1h-1zM741 0h1v1h-1zM741 671h1v1h-1zM742 671h1v1h-1zM743 671h1v1h-1zM746 0h1v1h-1zM750 671h1v1h-1zM752 0h1v1h-1zM754 0h1v1h-1zM756 671h1v1h-1zM758 0h1v1h-1zM761 0h1v1h-1zM763 671h1v1h-1zM765 671h1v1h-1zM768 0h1v1h-1zM768 671h1v1h-1zM769 0h1v1h-1zM771 0h1v1h-1zM773 0h1v1h-1zM773 671h1v1h-1zM774 0h1v1h-1zM774 671h1v1h-1zM780 671h1v1h-1zM782 671h1v1h-1zM783 0h1v1h-1zM783 671h1v1h-1zM787 671h1v1h-1zM788 0h1v1h-1zM789 0h1v1h-1zM791 0h1v1h-1zM792 0h1v1h-1zM792 671h1v1h-1zM795 0h1v1h-1zM798 671h1v1h-1zM799 671h1v1h-1zM800 0h1v1h-1zM800 671h1v1h-1zM801 0h1v1h-1zM802 0h1v1h-1zM803 0h1v1h-1zM804 0h1v1h-1zM804 671h1v1h-1zM805 671h1v1h-1zM806 671h1v1h-1zM807 0h1v1h-1zM809 671h1v1h-1zM812 0h1v1h-1zM813 671h1v1h-1zM814 0h1v1h-1zM815 671h1v1h-1zM816 0h1v1h-1zM817 0h1v1h-1zM818 671h1v1h-1zM821 0h1v1h-1zM826 671h1v1h-1zM827 0h1v1h-1zM829 0h1v1h-1zM831 671h1v1h-1zM835 671h1v1h-1zM836 0h1v1h-1zM836 671h1v1h-1zM839 0h1v1h-1zM841 671h1v1h-1zM844 0h1v1h-1zM844 671h1v1h-1zM846 0h1v1h-1zM847 671h1v1h-1zM849 671h1v1h-1zM850 0h1v1h-1zM852 0h1v1h-1zM853 671h1v1h-1zM857 0h1v1h-1zM857 671h1v1h-1zM858 0h1v1h-1zM861 0h1v1h-1zM861 671h1v1h-1zM863 0h1v1h-1zM864 671h1v1h-1zM865 671h1v1h-1zM866 671h1v1h-1zM867 0h1v1h-1zM869 671h1v1h-1zM873 0h1v1h-1zM873 671h1v1h-1zM874 0h1v1h-1zM874 671h1v1h-1zM875 0h1v1h-1zM875 671h1v1h-1zM878 671h1v1h-1zM880 0h1v1h-1zM881 0h1v1h-1zM884 671h1v1h-1zM886 0h1v1h-1zM886 671h1v1h-1zM887 0h1v1h-1zM889 671h1v1h-1zM892 0h1v1h-1zM892 671h1v1h-1zM894 671h1v1h-1zM896 0h1v1h-1zM896 671h1v1h-1zM897 0h1v1h-1zM897 671h1v1h-1zM898 671h1v1h-1zM899 0h1v1h-1zM899 671h1v1h-1zM900 671h1v1h-1zM901 671h1v1h-1zM902 0h1v1h-1zM903 0h1v1h-1zM905 0h1v1h-1zM906 0h1v1h-1zM908 671h1v1h-1zM910 671h1v1h-1zM911 0h1v1h-1zM911 671h1v1h-1zM913 0h1v1h-1zM914 0h1v1h-1zM915 0h1v1h-1zM915 671h1v1h-1zM916 671h1v1h-1zM917 0h1v1h-1zM918 0h1v1h-1zM919 0h1v1h-1zM920 0h1v1h-1zM921 671h1v1h-1zM922 671h1v1h-1zM923 0h1v1h-1zM923 671h1v1h-1zM926 0h1v1h-1zM926 671h1v1h-1zM927 671h1v1h-1zM928 671h1v1h-1zM929 671h1v1h-1zM930 671h1v1h-1zM931 0h1v1h-1zM931 671h1v1h-1zM933 0h1v1h-1zM934 671h1v1h-1zM935 671h1v1h-1zM936 0h1v1h-1zM937 671h1v1h-1zM938 0h1v1h-1zM938 671h1v1h-1zM940 0h1v1h-1zM940 671h1v1h-1zM943 0h1v1h-1zM943 671h1v1h-1zM945 671h1v1h-1zM946 671h1v1h-1zM948 671h1v1h-1zM950 671h1v1h-1zM951 0h1v1h-1zM952 671h1v1h-1zM954 0h1v1h-1zM956 0h1v1h-1zM958 0h1v1h-1zM960 0h1v1h-1zM963 671h1v1h-1zM964 671h1v1h-1zM965 0h1v1h-1zM965 671h1v1h-1zM966 0h1v1h-1zM967 0h1v1h-1zM967 671h1v1h-1zM968 671h1v1h-1zM969 0h1v1h-1zM971 671h1v1h-1zM973 0h1v1h-1zM973 671h1v1h-1zM975 0h1v1h-1zM975 671h1v1h-1zM976 671h1v1h-1zM978 0h1v1h-1zM979 671h1v1h-1zM984 671h1v1h-1zM985 0h1v1h-1zM985 671h1v1h-1zM989 0h1v1h-1zM991 0h1v1h-1zM993 671h1v1h-1zM995 0h1v1h-1zM995 671h1v1h-1zM999 671h1v1h-1zM1000 671h1v1h-1zM1001 671h1v1h-1zM1003 671h1v1h-1zM1005 671h1v1h-1zM1006 0h1v1h-1zM1007 0h1v1h-1zM1009 0h1v1h-1zM1010 671h1v1h-1zM1011 0h1v1h-1zM1011 671h1v1h-1zM1012 0h1v1h-1zM1013 0h1v1h-1zM1013 671h1v1h-1zM1014 0h1v1h-1zM1017 0h1v1h-1zM1020 0h1v1h-1zM1020 671h1v1h-1zM1021 0h1v1h-1zM1023 0h1v1h-1zM1024 671h1v1h-1zM1026 0h1v1h-1zM1027 0h1v1h-1zM1028 0h1v1h-1zM1028 671h1v1h-1zM1030 0h1v1h-1zM1032 0h1v1h-1zM1032 671h1v1h-1zM1034 0h1v1h-1zM1034 671h1v1h-1zM1041 671h1v1h-1zM1042 671h1v1h-1zM1049 671h1v1h-1zM1051 671h1v1h-1zM1054 0h1v1h-1zM1054 671h1v1h-1zM1055 0h1v1h-1zM1056 671h1v1h-1zM1057 671h1v1h-1zM1059 671h1v1h-1zM1061 0h1v1h-1zM1061 671h1v1h-1zM1070 0h1v1h-1zM1075 671h1v1h-1zM1077 0h1v1h-1zM1077 671h1v1h-1zM1079 671h1v1h-1zM1083 0h1v1h-1zM1083 671h1v1h-1zM1085 0h1v1h-1zM1085 671h1v1h-1zM1088 671h1v1h-1zM1090 0h1v1h-1zM1091 0h1v1h-1zM1091 671h1v1h-1zM1093 671h1v1h-1zM1095 0h1v1h-1zM1098 0h1v1h-1zM1098 671h1v1h-1zM1099 671h1v1h-1zM1100 0h1v1h-1zM1100 671h1v1h-1zM1103 0h1v1h-1zM1103 671h1v1h-1zM1104 671h1v1h-1zM1106 0h1v1h-1zM1106 671h1v1h-1zM1107 0h1v1h-1zM1108 671h1v1h-1zM1110 0h1v1h-1zM1113 0h1v1h-1zM1113 671h1v1h-1zM1115 0h1v1h-1zM1116 671h1v1h-1zM1119 0h1v1h-1zM1120 671h1v1h-1zM1121 0h1v1h-1zM1123 0h1v1h-1zM1123 671h1v1h-1zM1124 671h1v1h-1zM1125 671h1v1h-1zM1126 671h1v1h-1zM1128 671h1v1h-1zM1129 0h1v1h-1zM1130 671h1v1h-1zM1131 0h1v1h-1zM1131 671h1v1h-1zM1132 0h1v1h-1zM1132 671h1v1h-1zM1133 671h1v1h-1zM1134 0h1v1h-1zM1135 0h1v1h-1zM1135 671h1v1h-1zM1136 671h1v1h-1zM1138 671h1v1h-1zM1141 0h1v1h-1zM1142 671h1v1h-1zM1143 671h1v1h-1zM1144 671h1v1h-1zM1146 671h1v1h-1zM1147 671h1v1h-1zM1148 671h1v1h-1zM1150 0h1v1h-1zM1152 671h1v1h-1zM1153 671h1v1h-1zM1154 0h1v1h-1zM1155 0h1v1h-1zM1156 0h1v1h-1zM1158 0h1v1h-1zM1158 671h1v1h-1zM1159 0h1v1h-1zM1159 671h1v1h-1zM1160 0h1v1h-1zM1161 0h1v1h-1zM1164 0h1v1h-1zM1164 671h1v1h-1zM1165 0h1v1h-1zM1168 671h1v1h-1zM1170 671h1v1h-1zM1171 0h1v1h-1zM1173 0h1v1h-1zM1173 671h1v1h-1zM1174 0h1v1h-1zM1174 671h1v1h-1zM1175 0h1v1h-1zM1176 0h1v1h-1zM1176 671h1v1h-1zM1177 671h1v1h-1zM1179 671h1v1h-1zM1181 0h1v1h-1zM1181 671h1v1h-1zM1183 0h1v1h-1zM1183 671h1v1h-1zM1185 0h1v1h-1zM1185 671h1v1h-1zM1186 0h1v1h-1zM1187 0h1v1h-1zM1188 671h1v1h-1zM1191 0h1v1h-1zM1191 671h1v1h-1zM1196 0h1v1h-1zM1198 671h1v1h-1zM1199 671h1v1h-1zM1201 0h1v1h-1zM1203 671h1v1h-1zM1204 0h1v1h-1zM1205 671h1v1h-1zM1206 0h1v1h-1zM1206 671h1v1h-1zM1208 0h1v1h-1zM1208 671h1v1h-1zM1211 0h1v1h-1zM1212 0h1v1h-1zM1213 0h1v1h-1zM1215 0h1v1h-1zM1218 0h1v1h-1zM1218 671h1v1h-1zM1219 671h1v1h-1zM1220 0h1v1h-1zM1220 671h1v1h-1zM1221 0h1v1h-1zM1222 671h1v1h-1zM1223 0h1v1h-1zM1224 671h1v1h-1zM1225 0h1v1h-1zM1225 671h1v1h-1zM1227 0h1v1h-1zM1229 0h1v1h-1zM1230 671h1v1h-1zM1231 671h1v1h-1zM1234 671h1v1h-1zM1235 0h1v1h-1zM1235 671h1v1h-1zM1236 0h1v1h-1zM1237 671h1v1h-1zM0 2h1v1h-1zM0 4h1v1h-1zM1237 4h1v1h-1zM1237 5h1v1h-1zM0 8h1v1h-1zM1237 8h1v1h-1zM0 13h1v1h-1zM1237 13h1v1h-1zM1237 14h1v1h-1zM1237 15h1v1h-1zM0 17h1v1h-1zM1237 17h1v1h-1zM1237 18h1v1h-1zM1237 19h1v1h-1zM0 22h1v1h-1zM0 24h1v1h-1zM1237 26h1v1h-1zM0 27h1v1h-1zM1237 28h1v1h-1zM0 29h1v1h-1zM1237 29h1v1h-1zM0 30h1v1h-1zM1237 34h1v1h-1zM0 36h1v1h-1zM1237 38h1v1h-1zM0 39h1v1h-1zM0 40h1v1h-1zM1237 40h1v1h-1zM0 42h1v1h-1zM0 46h1v1h-1zM1237 46h1v1h-1zM0 48h1v1h-1zM0 49h1v1h-1zM1237 49h1v1h-1zM1237 50h1v1h-1zM0 52h1v1h-1zM0 53h1v1h-1zM1237 54h1v1h-1zM1237 55h1v1h-1zM1237 58h1v1h-1zM0 60h1v1h-1zM1237 61h1v1h-1zM1237 63h1v1h-1zM1237 64h1v1h-1zM0 65h1v1h-1zM0 66h1v1h-1zM0 67h1v1h-1zM1237 67h1v1h-1zM0 72h1v1h-1zM0 73h1v1h-1zM0 75h1v1h-1zM1237 77h1v1h-1zM1237 78h1v1h-1zM0 80h1v1h-1zM1237 81h1v1h-1zM0 82h1v1h-1zM0 84h1v1h-1zM1237 84h1v1h-1zM0 85h1v1h-1zM0 86h1v1h-1zM0 87h1v1h-1zM1237 88h1v1h-1zM1237 91h1v1h-1zM0 92h1v1h-1zM1237 92h1v1h-1zM1237 94h1v1h-1zM0 95h1v1h-1zM1237 97h1v1h-1zM0 100h1v1h-1zM1237 100h1v1h-1zM0 101h1v1h-1zM1237 102h1v1h-1zM0 103h1v1h-1zM0 106h1v1h-1zM0 107h1v1h-1zM1237 107h1v1h-1zM0 109h1v1h-1zM1237 109h1v1h-1zM1237 110h1v1h-1zM0 111h1v1h-1zM0 112h1v1h-1zM1237 114h1v1h-1zM1237 118h1v1h-1zM0 121h1v1h-1zM0 125h1v1h-1zM1237 125h1v1h-1zM0 126h1v1h-1zM0 128h1v1h-1zM1237 128h1v1h-1zM0 129h1v1h-1zM1237 129h1v1h-1zM0 130h1v1h-1zM1237 132h1v1h-1zM0 133h1v1h-1zM1237 133h1v1h-1zM0 134h1v1h-1zM1237 134h1v1h-1zM1237 136h1v1h-1zM0 138h1v1h-1zM1237 138h1v1h-1zM0 142h1v1h-1zM1237 143h1v1h-1zM0 144h1v1h-1zM1237 144h1v1h-1zM0 145h1v1h-1zM1237 145h1v1h-1zM1237 146h1v1h-1zM1237 147h1v1h-1zM1237 149h1v1h-1zM1237 151h1v1h-1zM0 153h1v1h-1zM1237 153h1v1h-1zM0 154h1v1h-1zM1237 156h1v1h-1zM0 157h1v1h-1zM1237 159h1v1h-1zM0 160h1v1h-1zM0 161h1v1h-1zM0 162h1v1h-1zM1237 163h1v1h-1zM1237 164h1v1h-1zM1237 166h1v1h-1zM0 168h1v1h-1zM1237 168h1v1h-1zM0 169h1v1h-1zM1237 169h1v1h-1zM1237 170h1v1h-1zM1237 174h1v1h-1zM1237 175h1v1h-1zM1237 177h1v1h-1zM1237 179h1v1h-1zM0 181h1v1h-1zM1237 181h1v1h-1zM1237 184h1v1h-1zM1237 185h1v1h-1zM0 186h1v1h-1zM1237 186h1v1h-1zM0 187h1v1h-1zM1237 188h1v1h-1zM0 190h1v1h-1zM1237 190h1v1h-1zM0 192h1v1h-1zM1237 192h1v1h-1zM1237 193h1v1h-1zM1237 195h1v1h-1zM0 197h1v1h-1zM0 198h1v1h-1zM0 199h1v1h-1zM0 201h1v1h-1zM0 204h1v1h-1zM1237 204h1v1h-1zM0 205h1v1h-1zM0 206h1v1h-1zM1237 206h1v1h-1zM0 208h1v1h-1zM0 209h1v1h-1zM0 210h1v1h-1zM1237 211h1v1h-1zM0 213h1v1h-1zM1237 213h1v1h-1zM0 215h1v1h-1zM0 218h1v1h-1zM1237 220h1v1h-1zM0 222h1v1h-1zM1237 222h1v1h-1zM0 223h1v1h-1zM0 224h1v1h-1zM0 225h1v1h-1zM0 226h1v1h-1zM1237 226h1v1h-1zM1237 227h1v1h-1zM0 228h1v1h-1zM1237 230h1v1h-1zM0 231h1v1h-1zM1237 232h1v1h-1zM1237 233h1v1h-1zM1237 234h1v1h-1zM0 235h1v1h-1zM0 236h1v1h-1zM0 237h1v1h-1zM0 238h1v1h-1zM0 239h1v1h-1zM0 240h1v1h-1zM1237 241h1v1h-1zM1237 243h1v1h-1zM0 244h1v1h-1zM0 246h1v1h-1zM1237 246h1v1h-1zM0 247h1v1h-1zM1237 247h1v1h-1zM0 248h1v1h-1zM1237 250h1v1h-1zM1237 255h1v1h-1zM1237 258h1v1h-1zM1237 259h1v1h-1zM0 261h1v1h-1zM1237 262h1v1h-1zM0 263h1v1h-1zM1237 263h1v1h-1zM1237 265h1v1h-1zM1237 266h1v1h-1zM0 268h1v1h-1zM0 269h1v1h-1zM0 272h1v1h-1zM1237 276h1v1h-1zM0 278h1v1h-1zM0 279h1v1h-1zM0 282h1v1h-1zM1237 282h1v1h-1zM1237 285h1v1h-1zM0 286h1v1h-1zM1237 289h1v1h-1zM1237 291h1v1h-1zM0 292h1v1h-1zM1237 292h1v1h-1zM0 293h1v1h-1zM1237 295h1v1h-1zM1237 299h1v1h-1zM1237 301h1v1h-1zM1237 302h1v1h-1zM1237 303h1v1h-1zM0 304h1v1h-1zM0 305h1v1h-1zM1237 305h1v1h-1zM1237 306h1v1h-1zM0 307h1v1h-1zM1237 307h1v1h-1zM1237 308h1v1h-1zM0 310h1v1h-1zM1237 312h1v1h-1zM1237 314h1v1h-1zM1237 318h1v1h-1zM0 321h1v1h-1zM1237 321h1v1h-1zM0 325h1v1h-1zM1237 332h1v1h-1zM0 335h1v1h-1zM1237 335h1v1h-1zM0 336h1v1h-1zM0 337h1v1h-1zM1237 337h1v1h-1zM0 339h1v1h-1zM0 341h1v1h-1zM1237 344h1v1h-1zM0 345h1v1h-1zM0 346h1v1h-1zM0 347h1v1h-1zM1237 347h1v1h-1zM0 348h1v1h-1zM1237 348h1v1h-1zM0 351h1v1h-1zM1237 351h1v1h-1zM1237 353h1v1h-1zM0 354h1v1h-1zM1237 354h1v1h-1zM1237 358h1v1h-1zM0 360h1v1h-1zM1237 360h1v1h-1zM1237 362h1v1h-1zM0 363h1v1h-1zM0 364h1v1h-1zM0 368h1v1h-1zM1237 369h1v1h-1zM1237 370h1v1h-1zM1237 371h1v1h-1zM0 375h1v1h-1zM1237 375h1v1h-1zM1237 376h1v1h-1zM1237 377h1v1h-1zM0 378h1v1h-1zM1237 378h1v1h-1zM0 381h1v1h-1zM1237 382h1v1h-1zM0 383h1v1h-1zM0 384h1v1h-1zM0 385h1v1h-1zM1237 385h1v1h-1zM1237 386h1v1h-1zM1237 387h1v1h-1zM1237 388h1v1h-1zM1237 389h1v1h-1zM1237 391h1v1h-1zM0 393h1v1h-1zM0 394h1v1h-1zM1237 396h1v1h-1zM1237 397h1v1h-1zM0 400h1v1h-1zM1237 400h1v1h-1zM1237 402h1v1h-1zM0 405h1v1h-1zM1237 405h1v1h-1zM0 406h1v1h-1zM1237 407h1v1h-1zM1237 408h1v1h-1zM0 410h1v1h-1zM1237 411h1v1h-1zM0 412h1v1h-1zM0 413h1v1h-1zM0 414h1v1h-1zM0 415h1v1h-1zM1237 415h1v1h-1zM1237 416h1v1h-1zM0 419h1v1h-1zM0 420h1v1h-1zM0 421h1v1h-1zM1237 423h1v1h-1zM0 424h1v1h-1zM0 425h1v1h-1zM0 427h1v1h-1zM1237 427h1v1h-1zM1237 428h1v1h-1zM0 430h1v1h-1zM0 431h1v1h-1zM0 433h1v1h-1zM0 434h1v1h-1zM1237 434h1v1h-1zM0 435h1v1h-1zM0 437h1v1h-1zM0 440h1v1h-1zM0 441h1v1h-1zM1237 441h1v1h-1zM0 442h1v1h-1zM1237 443h1v1h-1zM1237 444h1v1h-1zM1237 445h1v1h-1zM1237 447h1v1h-1zM0 448h1v1h-1zM1237 449h1v1h-1zM1237 451h1v1h-1zM1237 453h1v1h-1zM1237 455h1v1h-1zM0 456h1v1h-1zM1237 457h1v1h-1zM0 458h1v1h-1zM1237 458h1v1h-1zM0 459h1v1h-1zM1237 459h1v1h-1zM0 460h1v1h-1zM0 465h1v1h-1zM0 467h1v1h-1zM0 468h1v1h-1zM1237 468h1v1h-1zM1237 470h1v1h-1zM1237 476h1v1h-1zM1237 478h1v1h-1zM0 480h1v1h-1zM0 481h1v1h-1zM1237 481h1v1h-1zM1237 482h1v1h-1zM1237 488h1v1h-1zM0 490h1v1h-1zM0 492h1v1h-1zM0 493h1v1h-1zM1237 493h1v1h-1zM0 496h1v1h-1zM1237 496h1v1h-1zM1237 498h1v1h-1zM0 499h1v1h-1zM1237 499h1v1h-1zM0 502h1v1h-1zM0 503h1v1h-1zM0 504h1v1h-1zM1237 504h1v1h-1zM0 506h1v1h-1zM1237 510h1v1h-1zM1237 511h1v1h-1zM1237 512h1v1h-1zM0 513h1v1h-1zM0 515h1v1h-1zM0 516h1v1h-1zM0 520h1v1h-1zM0 527h1v1h-1zM1237 531h1v1h-1zM0 532h1v1h-1zM1237 532h1v1h-1zM0 534h1v1h-1zM1237 535h1v1h-1zM1237 537h1v1h-1zM1237 538h1v1h-1zM0 544h1v1h-1zM1237 544h1v1h-1zM1237 546h1v1h-1zM0 547h1v1h-1zM1237 548h1v1h-1zM1237 549h1v1h-1zM0 550h1v1h-1zM1237 550h1v1h-1zM0 551h1v1h-1zM0 553h1v1h-1zM1237 553h1v1h-1zM1237 554h1v1h-1zM0 555h1v1h-1zM0 556h1v1h-1zM1237 556h1v1h-1zM1237 558h1v1h-1zM0 559h1v1h-1zM0 562h1v1h-1zM1237 562h1v1h-1zM1237 565h1v1h-1zM1237 567h1v1h-1zM1237 568h1v1h-1zM1237 569h1v1h-1zM0 572h1v1h-1zM1237 572h1v1h-1zM0 573h1v1h-1zM0 576h1v1h-1zM1237 576h1v1h-1zM0 581h1v1h-1zM1237 582h1v1h-1zM0 583h1v1h-1zM0 586h1v1h-1zM1237 586h1v1h-1zM0 587h1v1h-1zM0 591h1v1h-1zM0 593h1v1h-1zM0 598h1v1h-1zM0 600h1v1h-1zM1237 600h1v1h-1zM0 602h1v1h-1zM1237 602h1v1h-1zM0 603h1v1h-1zM1237 603h1v1h-1zM1237 606h1v1h-1zM1237 607h1v1h-1zM0 608h1v1h-1zM0 609h1v1h-1zM1237 609h1v1h-1zM0 610h1v1h-1zM0 612h1v1h-1zM0 613h1v1h-1zM1237 613h1v1h-1zM1237 614h1v1h-1zM0 615h1v1h-1zM0 616h1v1h-1zM0 617h1v1h-1zM0 619h1v1h-1zM0 620h1v1h-1zM1237 621h1v1h-1zM0 625h1v1h-1zM1237 627h1v1h-1zM1237 628h1v1h-1zM1237 629h1v1h-1zM0 632h1v1h-1zM1237 632h1v1h-1zM1237 633h1v1h-1zM0 634h1v1h-1zM0 636h1v1h-1zM0 637h1v1h-1zM1237 637h1v1h-1zM0 642h1v1h-1zM1237 642h1v1h-1zM0 643h1v1h-1zM0 645h1v1h-1zM0 646h1v1h-1zM1237 647h1v1h-1zM0 648h1v1h-1zM1237 648h1v1h-1zM0 651h1v1h-1zM1237 651h1v1h-1zM0 652h1v1h-1zM0 656h1v1h-1zM1237 656h1v1h-1zM0 658h1v1h-1zM1237 658h1v1h-1zM0 659h1v1h-1zM0 664h1v1h-1zM1237 664h1v1h-1zM0 665h1v1h-1zM1237 666h1v1h-1zM1237 668h1v1h-1zM0 670h1v1h-1zM1237 670h1v1h-1z"/><path fill="rgb(210,210,210)" d="M3 1h1v1h-1zM4 1h1v1h-1zM4 670h1v1h-1zM7 670h1v1h-1zM8 670h1v1h-1zM13 1h1v1h-1zM14 670h1v1h-1zM19 1h1v1h-1zM19 670h1v1h-1zM21 1h1v1h-1zM21 670h1v1h-1zM26 1h1v1h-1zM26 670h1v1h-1zM27 670h1v1h-1zM29 1h1v1h-1zM30 1h1v1h-1zM31 1h1v1h-1zM33 1h1v1h-1zM37 1h1v1h-1zM37 670h1v1h-1zM39 670h1v1h-1zM40 670h1v1h-1zM42 670h1v1h-1zM44 670h1v1h-1zM46 670h1v1h-1zM48 670h1v1h-1zM50 670h1v1h-1zM52 670h1v1h-1zM53 1h1v1h-1zM53 670h1v1h-1zM60 670h1v1h-1zM63 1h1v1h-1zM67 1h1v1h-1zM73 1h1v1h-1zM78 1h1v1h-1zM81 670h1v1h-1zM86 1h1v1h-1zM88 1h1v1h-1zM90 1h1v1h-1zM94 1h1v1h-1zM99 670h1v1h-1zM100 1h1v1h-1zM100 670h1v1h-1zM101 670h1v1h-1zM102 1h1v1h-1zM105 1h1v1h-1zM105 670h1v1h-1zM108 670h1v1h-1zM110 670h1v1h-1zM114 1h1v1h-1zM114 670h1v1h-1zM115 670h1v1h-1zM117 670h1v1h-1zM118 1h1v1h-1zM118 670h1v1h-1zM121 670h1v1h-1zM122 1h1v1h-1zM123 1h1v1h-1zM125 1h1v1h-1zM127 670h1v1h-1zM131 1h1v1h-1zM134 670h1v1h-1zM136 670h1v1h-1zM137 670h1v1h-1zM139 1h1v1h-1zM139 670h1v1h-1zM140 670h1v1h-1zM142 1h1v1h-1zM142 670h1v1h-1zM145 1h1v1h-1zM148 670h1v1h-1zM150 670h1v1h-1zM152 1h1v1h-1zM154 670h1v1h-1zM157 670h1v1h-1zM159 1h1v1h-1zM159 670h1v1h-1zM161 1h1v1h-1zM165 1h1v1h-1zM168 670h1v1h-1zM170 670h1v1h-1zM171 670h1v1h-1zM172 670h1v1h-1zM173 1h1v1h-1zM176 1h1v1h-1zM186 1h1v1h-1zM187 1h1v1h-1zM188 1h1v1h-1zM191 1h1v1h-1zM192 1h1v1h-1zM193 1h1v1h-1zM193 670h1v1h-1zM195 670h1v1h-1zM196 670h1v1h-1zM202 1h1v1h-1zM203 1h1v1h-1zM203 670h1v1h-1zM209 1h1v1h-1zM212 670h1v1h-1zM213 1h1v1h-1zM214 670h1v1h-1zM218 1h1v1h-1zM221 1h1v1h-1zM223 670h1v1h-1zM231 1h1v1h-1zM233 1h1v1h-1zM233 670h1v1h-1zM235 1h1v1h-1zM238 670h1v1h-1zM239 670h1v1h-1zM240 670h1v1h-1zM245 1h1v1h-1zM249 670h1v1h-1zM250 1h1v1h-1zM252 1h1v1h-1zM252 670h1v1h-1zM253 1h1v1h-1zM254 1h1v1h-1zM256 670h1v1h-1zM257 1h1v1h-1zM258 670h1v1h-1zM262 1h1v1h-1zM262 670h1v1h-1zM263 1h1v1h-1zM263 670h1v1h-1zM267 670h1v1h-1zM269 1h1v1h-1zM269 670h1v1h-1zM273 1h1v1h-1zM274 1h1v1h-1zM276 670h1v1h-1zM278 1h1v1h-1zM278 670h1v1h-1zM279 670h1v1h-1zM283 1h1v1h-1zM289 1h1v1h-1zM294 1h1v1h-1zM295 1h1v1h-1zM295 670h1v1h-1zM296 670h1v1h-1zM298 670h1v1h-1zM299 1h1v1h-1zM302 670h1v1h-1zM303 1h1v1h-1zM310 670h1v1h-1zM312 670h1v1h-1zM314 1h1v1h-1zM316 1h1v1h-1zM318 1h1v1h-1zM319 1h1v1h-1zM320 1h1v1h-1zM321 670h1v1h-1zM322 1h1v1h-1zM322 670h1v1h-1zM323 1h1v1h-1zM324 670h1v1h-1zM325 1h1v1h-1zM327 1h1v1h-1zM328 670h1v1h-1zM334 670h1v1h-1zM335 1h1v1h-1zM336 1h1v1h-1zM339 670h1v1h-1zM341 1h1v1h-1zM342 670h1v1h-1zM345 1h1v1h-1zM351 670h1v1h-1zM360 670h1v1h-1zM364 670h1v1h-1zM367 1h1v1h-1zM372 670h1v1h-1zM373 670h1v1h-1zM375 1h1v1h-1zM375 670h1v1h-1zM376 670h1v1h-1zM383 670h1v1h-1zM390 1h1v1h-1zM391 1h1v1h-1zM393 670h1v1h-1zM403 1h1v1h-1zM405 1h1v1h-1zM407 670h1v1h-1zM411 670h1v1h-1zM415 670h1v1h-1zM420 670h1v1h-1zM421 1h1v1h-1zM424 670h1v1h-1zM430 670h1v1h-1zM432 1h1v1h-1zM432 670h1v1h-1zM434 1h1v1h-1zM437 670h1v1h-1zM438 1h1v1h-1zM440 1h1v1h-1zM441 1h1v1h-1zM441 670h1v1h-1zM443 1h1v1h-1zM446 670h1v1h-1zM447 670h1v1h-1zM448 1h1v1h-1zM448 670h1v1h-1zM453 1h1v1h-1zM454 670h1v1h-1zM461 1h1v1h-1zM466 1h1v1h-1zM466 670h1v1h-1zM468 1h1v1h-1zM480 1h1v1h-1zM481 1h1v1h-1zM481 670h1v1h-1zM482 1h1v1h-1zM483 1h1v1h-1zM484 1h1v1h-1zM488 1h1v1h-1zM489 670h1v1h-1zM491 670h1v1h-1zM494 1h1v1h-1zM494 670h1v1h-1zM495 1h1v1h-1zM495 670h1v1h-1zM497 1h1v1h-1zM497 670h1v1h-1zM498 1h1v1h-1zM504 670h1v1h-1zM505 1h1v1h-1zM505 670h1v1h-1zM507 1h1v1h-1zM508 670h1v1h-1zM515 1h1v1h-1zM515 670h1v1h-1zM517 1h1v1h-1zM519 1h1v1h-1zM531 1h1v1h-1zM533 670h1v1h-1zM535 1h1v1h-1zM538 670h1v1h-1zM539 670h1v1h-1zM540 670h1v1h-1zM544 1h1v1h-1zM553 670h1v1h-1zM554 670h1v1h-1zM555 670h1v1h-1zM557 670h1v1h-1zM560 1h1v1h-1zM561 1h1v1h-1zM562 670h1v1h-1zM566 1h1v1h-1zM566 670h1v1h-1zM567 670h1v1h-1zM568 1h1v1h-1zM569 670h1v1h-1zM577 1h1v1h-1zM582 1h1v1h-1zM584 1h1v1h-1zM584 670h1v1h-1zM588 670h1v1h-1zM591 1h1v1h-1zM594 1h1v1h-1zM595 1h1v1h-1zM604 1h1v1h-1zM604 670h1v1h-1zM606 670h1v1h-1zM610 670h1v1h-1zM611 1h1v1h-1zM613 670h1v1h-1zM616 1h1v1h-1zM617 1h1v1h-1zM618 1h1v1h-1zM622 670h1v1h-1zM624 1h1v1h-1zM625 670h1v1h-1zM629 670h1v1h-1zM632 670h1v1h-1zM633 1h1v1h-1zM633 670h1v1h-1zM635 1h1v1h-1zM638 1h1v1h-1zM638 670h1v1h-1zM642 1h1v1h-1zM648 1h1v1h-1zM648 670h1v1h-1zM649 1h1v1h-1zM650 1h1v1h-1zM653 670h1v1h-1zM656 670h1v1h-1zM657 1h1v1h-1zM657 670h1v1h-1zM659 1h1v1h-1zM660 1h1v1h-1zM661 670h1v1h-1zM663 670h1v1h-1zM665 670h1v1h-1zM666 670h1v1h-1zM668 1h1v1h-1zM668 670h1v1h-1zM673 670h1v1h-1zM674 1h1v1h-1zM676 1h1v1h-1zM677 670h1v1h-1zM681 670h1v1h-1zM682 670h1v1h-1zM685 1h1v1h-1zM686 670h1v1h-1zM687 670h1v1h-1zM692 670h1v1h-1zM693 1h1v1h-1zM695 1h1v1h-1zM696 670h1v1h-1zM698 1h1v1h-1zM698 670h1v1h-1zM705 1h1v1h-1zM711 670h1v1h-1zM727 670h1v1h-1zM728 670h1v1h-1zM732 670h1v1h-1zM740 1h1v1h-1zM740 670h1v1h-1zM744 670h1v1h-1zM746 1h1v1h-1zM749 1h1v1h-1zM750 670h1v1h-1zM753 670h1v1h-1zM754 1h1v1h-1zM759 670h1v1h-1zM762 1h1v1h-1zM765 1h1v1h-1zM768 670h1v1h-1zM772 1h1v1h-1zM776 670h1v1h-1zM779 1h1v1h-1zM780 670h1v1h-1zM781 1h1v1h-1zM781 670h1v1h-1zM785 670h1v1h-1zM791 670h1v1h-1zM793 1h1v1h-1zM798 670h1v1h-1zM804 1h1v1h-1zM807 670h1v1h-1zM808 1h1v1h-1zM810 670h1v1h-1zM811 670h1v1h-1zM813 670h1v1h-1zM815 1h1v1h-1zM823 670h1v1h-1zM824 670h1v1h-1zM827 670h1v1h-1zM829 1h1v1h-1zM834 1h1v1h-1zM835 1h1v1h-1zM835 670h1v1h-1zM836 670h1v1h-1zM837 1h1v1h-1zM844 1h1v1h-1zM846 670h1v1h-1zM849 1h1v1h-1zM856 1h1v1h-1zM861 670h1v1h-1zM864 1h1v1h-1zM866 1h1v1h-1zM870 1h1v1h-1zM873 670h1v1h-1zM878 670h1v1h-1zM879 1h1v1h-1zM880 670h1v1h-1zM882 670h1v1h-1zM883 1h1v1h-1zM884 1h1v1h-1zM887 1h1v1h-1zM888 1h1v1h-1zM888 670h1v1h-1zM895 1h1v1h-1zM896 670h1v1h-1zM898 1h1v1h-1zM899 670h1v1h-1zM900 670h1v1h-1zM901 670h1v1h-1zM905 670h1v1h-1zM906 670h1v1h-1zM907 670h1v1h-1zM910 1h1v1h-1zM913 1h1v1h-1zM917 1h1v1h-1zM922 670h1v1h-1zM924 670h1v1h-1zM927 1h1v1h-1zM931 1h1v1h-1zM933 670h1v1h-1zM937 1h1v1h-1zM938 1h1v1h-1zM939 1h1v1h-1zM940 670h1v1h-1zM942 670h1v1h-1zM949 670h1v1h-1zM950 1h1v1h-1zM953 670h1v1h-1zM957 670h1v1h-1zM960 670h1v1h-1zM961 670h1v1h-1zM963 1h1v1h-1zM964 1h1v1h-1zM965 1h1v1h-1zM965 670h1v1h-1zM966 670h1v1h-1zM967 1h1v1h-1zM967 670h1v1h-1zM968 670h1v1h-1zM971 670h1v1h-1zM972 670h1v1h-1zM975 1h1v1h-1zM975 670h1v1h-1zM978 670h1v1h-1zM982 1h1v1h-1zM984 1h1v1h-1zM994 1h1v1h-1zM995 1h1v1h-1zM996 670h1v1h-1zM998 1h1v1h-1zM999 1h1v1h-1zM1001 1h1v1h-1zM1001 670h1v1h-1zM1007 1h1v1h-1zM1018 1h1v1h-1zM1018 670h1v1h-1zM1020 670h1v1h-1zM1021 1h1v1h-1zM1025 670h1v1h-1zM1027 1h1v1h-1zM1028 670h1v1h-1zM1030 670h1v1h-1zM1031 1h1v1h-1zM1036 1h1v1h-1zM1037 1h1v1h-1zM1040 1h1v1h-1zM1042 1h1v1h-1zM1048 1h1v1h-1zM1054 1h1v1h-1zM1057 1h1v1h-1zM1057 670h1v1h-1zM1061 670h1v1h-1zM1062 670h1v1h-1zM1063 1h1v1h-1zM1064 1h1v1h-1zM1073 670h1v1h-1zM1074 1h1v1h-1zM1074 670h1v1h-1zM1078 670h1v1h-1zM1080 670h1v1h-1zM1083 1h1v1h-1zM1085 1h1v1h-1zM1087 670h1v1h-1zM1097 670h1v1h-1zM1103 1h1v1h-1zM1104 670h1v1h-1zM1105 670h1v1h-1zM1115 1h1v1h-1zM1117 1h1v1h-1zM1119 1h1v1h-1zM1121 670h1v1h-1zM1122 670h1v1h-1zM1123 1h1v1h-1zM1125 1h1v1h-1zM1126 670h1v1h-1zM1130 1h1v1h-1zM1131 670h1v1h-1zM1140 1h1v1h-1zM1143 1h1v1h-1zM1145 1h1v1h-1zM1147 670h1v1h-1zM1148 1h1v1h-1zM1149 670h1v1h-1zM1150 1h1v1h-1zM1151 1h1v1h-1zM1152 1h1v1h-1zM1155 1h1v1h-1zM1159 1h1v1h-1zM1168 670h1v1h-1zM1170 1h1v1h-1zM1174 1h1v1h-1zM1181 670h1v1h-1zM1184 670h1v1h-1zM1189 1h1v1h-1zM1190 670h1v1h-1zM1195 670h1v1h-1zM1196 1h1v1h-1zM1200 1h1v1h-1zM1206 1h1v1h-1zM1206 670h1v1h-1zM1211 1h1v1h-1zM1211 670h1v1h-1zM1215 1h1v1h-1zM1217 1h1v1h-1zM1218 1h1v1h-1zM1221 1h1v1h-1zM1221 670h1v1h-1zM1226 670h1v1h-1zM1229 1h1v1h-1zM1231 1h1v1h-1zM1236 1h1v1h-1zM1236 2h1v1h-1zM1236 7h1v1h-1zM1236 9h1v1h-1zM1236 15h1v1h-1zM1 17h1v1h-1zM1 19h1v1h-1zM1 20h1v1h-1zM1 21h1v1h-1zM1236 21h1v1h-1zM1 28h1v1h-1zM1236 29h1v1h-1zM1 31h1v1h-1zM1236 32h1v1h-1zM1236 34h1v1h-1zM1236 35h1v1h-1zM1 36h1v1h-1zM1 43h1v1h-1zM1236 44h1v1h-1zM1 46h1v1h-1zM1 50h1v1h-1zM1 52h1v1h-1zM1 53h1v1h-1zM1 54h1v1h-1zM1236 54h1v1h-1zM1236 55h1v1h-1zM1236 56h1v1h-1zM1 58h1v1h-1zM1 65h1v1h-1zM1236 67h1v1h-1zM1236 68h1v1h-1zM1 72h1v1h-1zM1 76h1v1h-1zM1 77h1v1h-1zM1236 80h1v1h-1zM1236 82h1v1h-1zM1236 85h1v1h-1zM1 87h1v1h-1zM1236 87h1v1h-1zM1236 89h1v1h-1zM1236 91h1v1h-1zM1 93h1v1h-1zM1 94h1v1h-1zM1 95h1v1h-1zM1 97h1v1h-1zM1 99h1v1h-1zM1236 100h1v1h-1zM1 107h1v1h-1zM1236 108h1v1h-1zM1236 109h1v1h-1zM1 116h1v1h-1zM1236 118h1v1h-1zM1236 119h1v1h-1zM1236 126h1v1h-1zM1236 131h1v1h-1zM1 132h1v1h-1zM1236 135h1v1h-1zM1236 138h1v1h-1zM1 145h1v1h-1zM1236 147h1v1h-1zM1 148h1v1h-1zM1 149h1v1h-1zM1236 152h1v1h-1zM1236 155h1v1h-1zM1 159h1v1h-1zM1236 162h1v1h-1zM1 165h1v1h-1zM1236 165h1v1h-1zM1236 166h1v1h-1zM1 171h1v1h-1zM1 173h1v1h-1zM1236 173h1v1h-1zM1 174h1v1h-1zM1 183h1v1h-1zM1236 186h1v1h-1zM1236 188h1v1h-1zM1 190h1v1h-1zM1236 197h1v1h-1zM1 198h1v1h-1zM1236 198h1v1h-1zM1236 203h1v1h-1zM1236 205h1v1h-1zM1 208h1v1h-1zM1236 208h1v1h-1zM1 212h1v1h-1zM1 213h1v1h-1zM1236 214h1v1h-1zM1236 216h1v1h-1zM1236 218h1v1h-1zM1236 219h1v1h-1zM1 220h1v1h-1zM1 224h1v1h-1zM1 225h1v1h-1zM1 226h1v1h-1zM1236 227h1v1h-1zM1236 229h1v1h-1zM1236 231h1v1h-1zM1 233h1v1h-1zM1236 233h1v1h-1zM1236 234h1v1h-1zM1236 237h1v1h-1zM1 242h1v1h-1zM1 243h1v1h-1zM1236 245h1v1h-1zM1236 248h1v1h-1zM1 251h1v1h-1zM1 261h1v1h-1zM1236 261h1v1h-1zM1236 262h1v1h-1zM1 266h1v1h-1zM1 267h1v1h-1zM1236 267h1v1h-1zM1236 270h1v1h-1zM1 271h1v1h-1zM1236 272h1v1h-1zM1 274h1v1h-1zM1 285h1v1h-1zM1236 287h1v1h-1zM1 291h1v1h-1zM1236 291h1v1h-1zM1 292h1v1h-1zM1236 294h1v1h-1zM1236 300h1v1h-1zM1 301h1v1h-1zM1 302h1v1h-1zM1236 305h1v1h-1zM1236 306h1v1h-1zM1 313h1v1h-1zM1236 314h1v1h-1zM1236 317h1v1h-1zM1236 319h1v1h-1zM1 320h1v1h-1zM1 322h1v1h-1zM1 325h1v1h-1zM1 327h1v1h-1zM1236 329h1v1h-1zM1236 332h1v1h-1zM1 338h1v1h-1zM1236 342h1v1h-1zM1236 343h1v1h-1zM1 345h1v1h-1zM1236 345h1v1h-1zM1 354h1v1h-1zM1 355h1v1h-1zM1236 356h1v1h-1zM1 358h1v1h-1zM1 360h1v1h-1zM1236 360h1v1h-1zM1236 361h1v1h-1zM1 364h1v1h-1zM1236 364h1v1h-1zM1236 366h1v1h-1zM1236 369h1v1h-1zM1236 370h1v1h-1zM1 374h1v1h-1zM1236 376h1v1h-1zM1 377h1v1h-1zM1 379h1v1h-1zM1 381h1v1h-1zM1 385h1v1h-1zM1236 395h1v1h-1zM1 399h1v1h-1zM1236 399h1v1h-1zM1 400h1v1h-1zM1 401h1v1h-1zM1 407h1v1h-1zM1236 409h1v1h-1zM1236 411h1v1h-1zM1 417h1v1h-1zM1236 417h1v1h-1zM1236 421h1v1h-1zM1 423h1v1h-1zM1 425h1v1h-1zM1 426h1v1h-1zM1236 428h1v1h-1zM1 429h1v1h-1zM1236 429h1v1h-1zM1236 432h1v1h-1zM1236 433h1v1h-1zM1236 438h1v1h-1zM1236 441h1v1h-1zM1236 442h1v1h-1zM1 451h1v1h-1zM1236 451h1v1h-1zM1236 452h1v1h-1zM1 453h1v1h-1zM1 459h1v1h-1zM1 461h1v1h-1zM1236 462h1v1h-1zM1236 467h1v1h-1zM1 469h1v1h-1zM1236 469h1v1h-1zM1 471h1v1h-1zM1236 471h1v1h-1zM1236 472h1v1h-1zM1236 474h1v1h-1zM1 478h1v1h-1zM1 480h1v1h-1zM1236 483h1v1h-1zM1 485h1v1h-1zM1236 488h1v1h-1zM1 489h1v1h-1zM1 491h1v1h-1zM1 492h1v1h-1zM1236 498h1v1h-1zM1236 499h1v1h-1zM1 500h1v1h-1zM1236 504h1v1h-1zM1236 505h1v1h-1zM1 506h1v1h-1zM1 508h1v1h-1zM1 510h1v1h-1zM1236 510h1v1h-1zM1 512h1v1h-1zM1236 531h1v1h-1zM1236 533h1v1h-1zM1236 534h1v1h-1zM1 535h1v1h-1zM1 538h1v1h-1zM1236 538h1v1h-1zM1 543h1v1h-1zM1236 543h1v1h-1zM1 550h1v1h-1zM1 552h1v1h-1zM1236 558h1v1h-1zM1 560h1v1h-1zM1236 562h1v1h-1zM1236 566h1v1h-1zM1236 567h1v1h-1zM1 568h1v1h-1zM1 570h1v1h-1zM1236 571h1v1h-1zM1 576h1v1h-1zM1 577h1v1h-1zM1 578h1v1h-1zM1236 580h1v1h-1zM1236 584h1v1h-1zM1236 587h1v1h-1zM1 590h1v1h-1zM1 592h1v1h-1zM1236 593h1v1h-1zM1236 594h1v1h-1zM1 598h1v1h-1zM1236 598h1v1h-1zM1 599h1v1h-1zM1236 601h1v1h-1zM1 603h1v1h-1zM1 606h1v1h-1zM1236 606h1v1h-1zM1 607h1v1h-1zM1 610h1v1h-1zM1 613h1v1h-1zM1 614h1v1h-1zM1 616h1v1h-1zM1236 616h1v1h-1zM1 619h1v1h-1zM1236 621h1v1h-1zM1 624h1v1h-1zM1236 625h1v1h-1zM1 626h1v1h-1zM1236 633h1v1h-1zM1 636h1v1h-1zM1 646h1v1h-1zM1 647h1v1h-1zM1 650h1v1h-1zM1236 652h1v1h-1zM1 654h1v1h-1zM1 660h1v1h-1zM1 661h1v1h-1zM1 664h1v1h-1zM1236 664h1v1h-1zM1 667h1v1h-1zM1 669h1v1h-1zM1236 669h1v1h-1z"/><path fill="rgb(110,110,110)" d="M5 669h1v1h-1zM11 669h1v1h-1zM30 669h1v1h-1zM39 2h1v1h-1zM40 2h1v1h-1zM64 2h1v1h-1zM70 669h1v1h-1zM87 669h1v1h-1zM98 2h1v1h-1zM100 2h1v1h-1zM108 669h1v1h-1zM138 669h1v1h-1zM155 2h1v1h-1zM160 669h1v1h-1zM166 669h1v1h-1zM168 669h1v1h-1zM169 2h1v1h-1zM172 669h1v1h-1zM174 669h1v1h-1zM192 669h1v1h-1zM193 2h1v1h-1zM218 2h1v1h-1zM223 669h1v1h-1zM246 2h1v1h-1zM247 669h1v1h-1zM249 669h1v1h-1zM267 669h1v1h-1zM278 2h1v1h-1zM299 2h1v1h-1zM303 2h1v1h-1zM309 2h1v1h-1zM321 2h1v1h-1zM321 669h1v1h-1zM349 669h1v1h-1zM355 669h1v1h-1zM359 2h1v1h-1zM361 669h1v1h-1zM373 669h1v1h-1zM395 669h1v1h-1zM401 2h1v1h-1zM406 669h1v1h-1zM413 2h1v1h-1zM422 2h1v1h-1zM428 2h1v1h-1zM431 669h1v1h-1zM433 2h1v1h-1zM438 669h1v1h-1zM461 2h1v1h-1zM473 2h1v1h-1zM474 2h1v1h-1zM477 669h1v1h-1zM481 669h1v1h-1zM496 2h1v1h-1zM498 669h1v1h-1zM503 669h1v1h-1zM521 2h1v1h-1zM538 2h1v1h-1zM540 669h1v1h-1zM547 669h1v1h-1zM553 669h1v1h-1zM558 2h1v1h-1zM562 669h1v1h-1zM575 669h1v1h-1zM597 669h1v1h-1zM609 2h1v1h-1zM610 2h1v1h-1zM612 669h1v1h-1zM613 2h1v1h-1zM624 2h1v1h-1zM635 669h1v1h-1zM639 2h1v1h-1zM649 669h1v1h-1zM654 2h1v1h-1zM662 669h1v1h-1zM673 669h1v1h-1zM675 669h1v1h-1zM690 2h1v1h-1zM691 669h1v1h-1zM693 669h1v1h-1zM708 2h1v1h-1zM727 669h1v1h-1zM744 669h1v1h-1zM750 669h1v1h-1zM754 2h1v1h-1zM757 669h1v1h-1zM762 2h1v1h-1zM768 2h1v1h-1zM770 2h1v1h-1zM773 669h1v1h-1zM799 2h1v1h-1zM803 669h1v1h-1zM817 2h1v1h-1zM822 2h1v1h-1zM824 669h1v1h-1zM827 669h1v1h-1zM829 669h1v1h-1zM842 669h1v1h-1zM850 669h1v1h-1zM858 669h1v1h-1zM868 2h1v1h-1zM882 2h1v1h-1zM890 669h1v1h-1zM911 669h1v1h-1zM913 669h1v1h-1zM916 669h1v1h-1zM923 669h1v1h-1zM926 2h1v1h-1zM926 669h1v1h-1zM935 669h1v1h-1zM955 2h1v1h-1zM959 669h1v1h-1zM974 669h1v1h-1zM977 669h1v1h-1zM979 2h1v1h-1zM979 669h1v1h-1zM987 2h1v1h-1zM1012 669h1v1h-1zM1016 669h1v1h-1zM1018 2h1v1h-1zM1035 2h1v1h-1zM1062 2h1v1h-1zM1065 2h1v1h-1zM1069 669h1v1h-1zM1071 669h1v1h-1zM1072 669h1v1h-1zM1073 669h1v1h-1zM1080 2h1v1h-1zM1083 2h1v1h-1zM1090 669h1v1h-1zM1094 669h1v1h-1zM1111 669h1v1h-1zM1134 2h1v1h-1zM1155 2h1v1h-1zM1159 2h1v1h-1zM1175 2h1v1h-1zM1198 2h1v1h-1zM1201 669h1v1h-1zM1208 669h1v1h-1zM1225 2h1v1h-1zM1234 2h1v1h-1zM2 10h1v1h-1zM1235 22h1v1h-1zM2 25h1v1h-1zM2 30h1v1h-1zM1235 33h1v1h-1zM1235 44h1v1h-1zM2 45h1v1h-1zM1235 50h1v1h-1zM1235 63h1v1h-1zM1235 74h1v1h-1zM2 75h1v1h-1zM2 76h1v1h-1zM2 77h1v1h-1zM2 87h1v1h-1zM1235 107h1v1h-1zM1235 115h1v1h-1zM2 118h1v1h-1zM1235 122h1v1h-1zM1235 127h1v1h-1zM2 129h1v1h-1zM1235 130h1v1h-1zM2 149h1v1h-1zM2 152h1v1h-1zM1235 152h1v1h-1zM2 161h1v1h-1zM2 165h1v1h-1zM2 167h1v1h-1zM1235 170h1v1h-1zM1235 202h1v1h-1zM2 211h1v1h-1zM2 231h1v1h-1zM2 233h1v1h-1zM1235 275h1v1h-1zM2 288h1v1h-1zM2 302h1v1h-1zM2 307h1v1h-1zM2 313h1v1h-1zM2 318h1v1h-1zM1235 320h1v1h-1zM2 322h1v1h-1zM2 328h1v1h-1zM1235 336h1v1h-1zM2 341h1v1h-1zM2 344h1v1h-1zM2 352h1v1h-1zM2 368h1v1h-1zM1235 380h1v1h-1zM1235 399h1v1h-1zM2 406h1v1h-1zM1235 418h1v1h-1zM2 430h1v1h-1zM2 448h1v1h-1zM1235 448h1v1h-1zM2 458h1v1h-1zM1235 459h1v1h-1zM2 479h1v1h-1zM1235 488h1v1h-1zM1235 495h1v1h-1zM1235 496h1v1h-1zM2 507h1v1h-1zM2 509h1v1h-1zM1235 512h1v1h-1zM2 516h1v1h-1zM1235 517h1v1h-1zM1235 533h1v1h-1zM2 539h1v1h-1zM2 553h1v1h-1zM1235 553h1v1h-1zM2 556h1v1h-1zM1235 561h1v1h-1zM2 595h1v1h-1zM2 596h1v1h-1zM1235 603h1v1h-1zM2 639h1v1h-1zM1235 640h1v1h-1zM2 644h1v1h-1zM1235 644h1v1h-1zM2 656h1v1h-1zM1235 656h1v1h-1zM2 658h1v1h-1zM1235 662h1v1h-1z"/><path fill="rgb(60,60,60)" d="M5 3h1v1h-1zM6 3h1v1h-1zM17 668h1v1h-1zM29 3h1v1h-1zM29 668h1v1h-1zM52 668h1v1h-1zM74 668h1v1h-1zM76 668h1v1h-1zM77 3h1v1h-1zM92 668h1v1h-1zM97 668h1v1h-1zM113 668h1v1h-1zM126 3h1v1h-1zM141 3h1v1h-1zM153 668h1v1h-1zM155 3h1v1h-1zM161 668h1v1h-1zM167 668h1v1h-1zM171 3h1v1h-1zM171 668h1v1h-1zM180 3h1v1h-1zM193 668h1v1h-1zM200 668h1v1h-1zM210 3h1v1h-1zM232 668h1v1h-1zM237 668h1v1h-1zM243 668h1v1h-1zM273 668h1v1h-1zM274 668h1v1h-1zM278 3h1v1h-1zM293 3h1v1h-1zM297 3h1v1h-1zM305 3h1v1h-1zM320 668h1v1h-1zM322 3h1v1h-1zM345 3h1v1h-1zM365 3h1v1h-1zM374 3h1v1h-1zM393 3h1v1h-1zM397 3h1v1h-1zM403 3h1v1h-1zM439 3h1v1h-1zM450 668h1v1h-1zM458 3h1v1h-1zM498 3h1v1h-1zM501 668h1v1h-1zM505 3h1v1h-1zM541 668h1v1h-1zM549 668h1v1h-1zM566 3h1v1h-1zM566 668h1v1h-1zM568 3h1v1h-1zM569 3h1v1h-1zM587 668h1v1h-1zM597 668h1v1h-1zM619 668h1v1h-1zM630 668h1v1h-1zM644 668h1v1h-1zM657 668h1v1h-1zM666 668h1v1h-1zM675 3h1v1h-1zM681 3h1v1h-1zM683 668h1v1h-1zM689 3h1v1h-1zM693 668h1v1h-1zM704 3h1v1h-1zM706 668h1v1h-1zM712 668h1v1h-1zM724 3h1v1h-1zM726 3h1v1h-1zM737 668h1v1h-1zM739 3h1v1h-1zM743 3h1v1h-1zM745 3h1v1h-1zM756 668h1v1h-1zM779 3h1v1h-1zM782 668h1v1h-1zM788 3h1v1h-1zM804 668h1v1h-1zM817 3h1v1h-1zM832 3h1v1h-1zM863 3h1v1h-1zM867 3h1v1h-1zM868 3h1v1h-1zM876 668h1v1h-1zM878 3h1v1h-1zM884 668h1v1h-1zM890 3h1v1h-1zM914 3h1v1h-1zM934 3h1v1h-1zM955 668h1v1h-1zM956 3h1v1h-1zM961 3h1v1h-1zM980 668h1v1h-1zM984 668h1v1h-1zM986 3h1v1h-1zM988 668h1v1h-1zM997 668h1v1h-1zM998 668h1v1h-1zM1002 668h1v1h-1zM1012 668h1v1h-1zM1018 3h1v1h-1zM1031 668h1v1h-1zM1043 3h1v1h-1zM1044 3h1v1h-1zM1045 668h1v1h-1zM1051 3h1v1h-1zM1055 3h1v1h-1zM1056 668h1v1h-1zM1057 3h1v1h-1zM1093 668h1v1h-1zM1104 668h1v1h-1zM1106 3h1v1h-1zM1133 668h1v1h-1zM1134 3h1v1h-1zM1142 668h1v1h-1zM1146 668h1v1h-1zM1165 3h1v1h-1zM1171 668h1v1h-1zM1185 668h1v1h-1zM1202 3h1v1h-1zM1216 3h1v1h-1zM1223 3h1v1h-1zM1234 668h1v1h-1zM1234 3h1v1h-1zM1234 26h1v1h-1zM3 33h1v1h-1zM3 34h1v1h-1zM1234 39h1v1h-1zM1234 47h1v1h-1zM3 69h1v1h-1zM1234 95h1v1h-1zM1234 96h1v1h-1zM1234 112h1v1h-1zM3 118h1v1h-1zM1234 124h1v1h-1zM1234 128h1v1h-1zM3 132h1v1h-1zM1234 152h1v1h-1zM1234 158h1v1h-1zM3 159h1v1h-1zM3 160h1v1h-1zM3 162h1v1h-1zM3 167h1v1h-1zM1234 191h1v1h-1zM1234 195h1v1h-1zM1234 204h1v1h-1zM3 225h1v1h-1zM3 229h1v1h-1zM1234 232h1v1h-1zM1234 234h1v1h-1zM3 237h1v1h-1zM3 261h1v1h-1zM1234 266h1v1h-1zM1234 271h1v1h-1zM3 273h1v1h-1zM3 276h1v1h-1zM3 293h1v1h-1zM3 298h1v1h-1zM1234 300h1v1h-1zM1234 327h1v1h-1zM3 342h1v1h-1zM3 355h1v1h-1zM1234 390h1v1h-1zM1234 391h1v1h-1zM3 394h1v1h-1zM3 398h1v1h-1zM3 422h1v1h-1zM1234 430h1v1h-1zM3 440h1v1h-1zM1234 452h1v1h-1zM1234 467h1v1h-1zM1234 469h1v1h-1zM3 471h1v1h-1zM3 472h1v1h-1zM1234 477h1v1h-1zM1234 483h1v1h-1zM1234 487h1v1h-1zM3 488h1v1h-1zM3 495h1v1h-1zM1234 525h1v1h-1zM1234 542h1v1h-1zM1234 555h1v1h-1zM1234 566h1v1h-1zM1234 574h1v1h-1zM3 576h1v1h-1zM3 602h1v1h-1zM1234 603h1v1h-1zM1234 639h1v1h-1zM3 647h1v1h-1zM3 653h1v1h-1zM1234 670h1v1h-1z"/><path fill="rgb(45,45,45)" d="M17 4h1v1h-1zM20 667h1v1h-1zM35 4h1v1h-1zM36 4h1v1h-1zM55 667h1v1h-1zM88 667h1v1h-1zM109 4h1v1h-1zM122 4h1v1h-1zM123 4h1v1h-1zM129 667h1v1h-1zM133 4h1v1h-1zM153 4h1v1h-1zM157 667h1v1h-1zM166 4h1v1h-1zM169 667h1v1h-1zM177 667h1v1h-1zM180 667h1v1h-1zM189 667h1v1h-1zM211 667h1v1h-1zM217 4h1v1h-1zM224 667h1v1h-1zM228 4h1v1h-1zM235 4h1v1h-1zM249 667h1v1h-1zM257 667h1v1h-1zM263 667h1v1h-1zM269 4h1v1h-1zM274 4h1v1h-1zM283 4h1v1h-1zM285 4h1v1h-1zM292 4h1v1h-1zM303 667h1v1h-1zM308 4h1v1h-1zM355 4h1v1h-1zM357 4h1v1h-1zM365 4h1v1h-1zM375 667h1v1h-1zM409 4h1v1h-1zM438 4h1v1h-1zM459 667h1v1h-1zM465 667h1v1h-1zM476 667h1v1h-1zM482 667h1v1h-1zM497 667h1v1h-1zM506 4h1v1h-1zM514 667h1v1h-1zM529 4h1v1h-1zM536 667h1v1h-1zM537 4h1v1h-1zM563 4h1v1h-1zM569 667h1v1h-1zM601 4h1v1h-1zM604 667h1v1h-1zM605 667h1v1h-1zM616 4h1v1h-1zM631 667h1v1h-1zM636 4h1v1h-1zM645 667h1v1h-1zM650 4h1v1h-1zM660 667h1v1h-1zM661 667h1v1h-1zM669 4h1v1h-1zM690 667h1v1h-1zM696 667h1v1h-1zM754 667h1v1h-1zM757 667h1v1h-1zM758 667h1v1h-1zM765 4h1v1h-1zM771 667h1v1h-1zM783 4h1v1h-1zM783 667h1v1h-1zM799 4h1v1h-1zM806 667h1v1h-1zM807 667h1v1h-1zM822 4h1v1h-1zM831 4h1v1h-1zM839 4h1v1h-1zM852 667h1v1h-1zM871 4h1v1h-1zM871 667h1v1h-1zM876 667h1v1h-1zM881 667h1v1h-1zM890 667h1v1h-1zM901 667h1v1h-1zM912 4h1v1h-1zM923 4h1v1h-1zM923 667h1v1h-1zM924 4h1v1h-1zM941 4h1v1h-1zM943 4h1v1h-1zM957 4h1v1h-1zM960 4h1v1h-1zM967 4h1v1h-1zM973 667h1v1h-1zM995 4h1v1h-1zM998 667h1v1h-1zM1001 4h1v1h-1zM1002 4h1v1h-1zM1015 4h1v1h-1zM1028 4h1v1h-1zM1041 4h1v1h-1zM1077 4h1v1h-1zM1094 667h1v1h-1zM1096 667h1v1h-1zM1101 667h1v1h-1zM1102 4h1v1h-1zM1133 667h1v1h-1zM1171 667h1v1h-1zM1199 4h1v1h-1zM1206 4h1v1h-1zM1221 4h1v1h-1zM4 28h1v1h-1zM1233 29h1v1h-1zM1233 37h1v1h-1zM1233 40h1v1h-1zM4 63h1v1h-1zM4 78h1v1h-1zM4 93h1v1h-1zM4 96h1v1h-1zM1233 116h1v1h-1zM4 138h1v1h-1zM4 162h1v1h-1zM4 170h1v1h-1zM4 178h1v1h-1zM4 183h1v1h-1zM4 188h1v1h-1zM4 221h1v1h-1zM1233 226h1v1h-1zM4 231h1v1h-1zM4 242h1v1h-1zM1233 242h1v1h-1zM4 252h1v1h-1zM4 265h1v1h-1zM1233 267h1v1h-1zM1233 286h1v1h-1zM1233 287h1v1h-1zM1233 290h1v1h-1zM4 295h1v1h-1zM4 308h1v1h-1zM4 309h1v1h-1zM1233 319h1v1h-1zM4 321h1v1h-1zM1233 322h1v1h-1zM4 324h1v1h-1zM1233 325h1v1h-1zM4 328h1v1h-1zM1233 334h1v1h-1zM1233 353h1v1h-1zM1233 358h1v1h-1zM1233 360h1v1h-1zM1233 400h1v1h-1zM4 437h1v1h-1zM4 453h1v1h-1zM4 457h1v1h-1zM4 462h1v1h-1zM4 475h1v1h-1zM4 494h1v1h-1zM1233 495h1v1h-1zM4 503h1v1h-1zM1233 506h1v1h-1zM1233 510h1v1h-1zM1233 532h1v1h-1zM4 535h1v1h-1zM1233 539h1v1h-1zM1233 550h1v1h-1zM4 560h1v1h-1zM4 566h1v1h-1zM1233 576h1v1h-1zM1233 583h1v1h-1zM4 588h1v1h-1zM1233 600h1v1h-1zM4 614h1v1h-1zM4 619h1v1h-1zM1233 620h1v1h-1zM4 628h1v1h-1zM4 631h1v1h-1zM4 633h1v1h-1zM4 644h1v1h-1zM4 645h1v1h-1zM4 646h1v1h-1zM4 669h1v1h-1z"/><path fill="rgb(35,35,35)" d="M3 5h1v1h-1zM8 666h1v1h-1zM9 666h1v1h-1zM20 5h1v1h-1zM31 666h1v1h-1zM76 5h1v1h-1zM79 5h1v1h-1zM83 666h1v1h-1zM106 5h1v1h-1zM106 666h1v1h-1zM113 666h1v1h-1zM135 666h1v1h-1zM138 666h1v1h-1zM141 666h1v1h-1zM145 666h1v1h-1zM151 5h1v1h-1zM168 666h1v1h-1zM173 666h1v1h-1zM177 5h1v1h-1zM183 5h1v1h-1zM193 5h1v1h-1zM198 666h1v1h-1zM218 5h1v1h-1zM221 5h1v1h-1zM250 666h1v1h-1zM255 5h1v1h-1zM256 666h1v1h-1zM307 5h1v1h-1zM321 5h1v1h-1zM351 666h1v1h-1zM355 5h1v1h-1zM359 666h1v1h-1zM379 666h1v1h-1zM408 666h1v1h-1zM412 666h1v1h-1zM435 666h1v1h-1zM443 5h1v1h-1zM451 5h1v1h-1zM458 5h1v1h-1zM463 666h1v1h-1zM465 666h1v1h-1zM481 5h1v1h-1zM496 5h1v1h-1zM500 5h1v1h-1zM501 666h1v1h-1zM511 5h1v1h-1zM513 5h1v1h-1zM526 5h1v1h-1zM539 5h1v1h-1zM544 666h1v1h-1zM545 666h1v1h-1zM554 666h1v1h-1zM572 5h1v1h-1zM575 5h1v1h-1zM576 666h1v1h-1zM581 666h1v1h-1zM604 5h1v1h-1zM612 666h1v1h-1zM633 666h1v1h-1zM641 666h1v1h-1zM648 5h1v1h-1zM657 5h1v1h-1zM664 666h1v1h-1zM667 666h1v1h-1zM705 5h1v1h-1zM710 5h1v1h-1zM720 666h1v1h-1zM726 5h1v1h-1zM731 666h1v1h-1zM735 5h1v1h-1zM749 666h1v1h-1zM765 666h1v1h-1zM769 5h1v1h-1zM789 5h1v1h-1zM816 5h1v1h-1zM817 5h1v1h-1zM817 666h1v1h-1zM829 5h1v1h-1zM848 666h1v1h-1zM849 5h1v1h-1zM880 666h1v1h-1zM895 666h1v1h-1zM902 666h1v1h-1zM914 5h1v1h-1zM924 5h1v1h-1zM926 666h1v1h-1zM928 666h1v1h-1zM980 5h1v1h-1zM982 666h1v1h-1zM1005 666h1v1h-1zM1008 666h1v1h-1zM1017 666h1v1h-1zM1043 5h1v1h-1zM1049 666h1v1h-1zM1054 666h1v1h-1zM1077 5h1v1h-1zM1080 666h1v1h-1zM1081 5h1v1h-1zM1088 5h1v1h-1zM1089 666h1v1h-1zM1109 666h1v1h-1zM1144 5h1v1h-1zM1161 666h1v1h-1zM1198 666h1v1h-1zM1213 666h1v1h-1zM1232 11h1v1h-1zM1232 14h1v1h-1zM1232 62h1v1h-1zM1232 63h1v1h-1zM5 72h1v1h-1zM5 85h1v1h-1zM1232 86h1v1h-1zM5 102h1v1h-1zM1232 112h1v1h-1zM5 126h1v1h-1zM1232 141h1v1h-1zM5 155h1v1h-1zM1232 168h1v1h-1zM5 191h1v1h-1zM1232 194h1v1h-1zM5 211h1v1h-1zM1232 211h1v1h-1zM1232 239h1v1h-1zM5 248h1v1h-1zM1232 248h1v1h-1zM5 259h1v1h-1zM5 263h1v1h-1zM1232 288h1v1h-1zM5 305h1v1h-1zM5 314h1v1h-1zM5 357h1v1h-1zM1232 357h1v1h-1zM5 366h1v1h-1zM5 371h1v1h-1zM1232 376h1v1h-1zM1232 391h1v1h-1zM1232 428h1v1h-1zM1232 434h1v1h-1zM1232 435h1v1h-1zM5 451h1v1h-1zM5 454h1v1h-1zM5 474h1v1h-1zM1232 481h1v1h-1zM1232 486h1v1h-1zM5 504h1v1h-1zM5 509h1v1h-1zM1232 510h1v1h-1zM1232 511h1v1h-1zM1232 520h1v1h-1zM5 543h1v1h-1zM5 554h1v1h-1zM1232 555h1v1h-1zM5 572h1v1h-1zM5 604h1v1h-1zM5 618h1v1h-1zM5 626h1v1h-1zM5 649h1v1h-1zM5 650h1v1h-1zM1232 652h1v1h-1z"/><path fill="rgb(30,30,30)" d="M2 665h1v1h-1zM40 665h1v1h-1zM60 6h1v1h-1zM92 6h1v1h-1zM96 665h1v1h-1zM103 665h1v1h-1zM142 665h1v1h-1zM150 6h1v1h-1zM158 6h1v1h-1zM163 6h1v1h-1zM181 665h1v1h-1zM187 6h1v1h-1zM200 6h1v1h-1zM206 665h1v1h-1zM218 665h1v1h-1zM229 665h1v1h-1zM232 665h1v1h-1zM237 665h1v1h-1zM238 6h1v1h-1zM242 6h1v1h-1zM260 6h1v1h-1zM269 6h1v1h-1zM271 6h1v1h-1zM279 665h1v1h-1zM302 665h1v1h-1zM304 665h1v1h-1zM337 665h1v1h-1zM349 6h1v1h-1zM354 665h1v1h-1zM360 6h1v1h-1zM368 6h1v1h-1zM398 6h1v1h-1zM405 6h1v1h-1zM435 6h1v1h-1zM500 665h1v1h-1zM505 665h1v1h-1zM509 6h1v1h-1zM513 6h1v1h-1zM513 665h1v1h-1zM541 665h1v1h-1zM547 6h1v1h-1zM566 665h1v1h-1zM568 665h1v1h-1zM583 6h1v1h-1zM594 6h1v1h-1zM604 6h1v1h-1zM616 665h1v1h-1zM644 6h1v1h-1zM671 6h1v1h-1zM684 6h1v1h-1zM684 665h1v1h-1zM707 6h1v1h-1zM710 665h1v1h-1zM715 6h1v1h-1zM747 6h1v1h-1zM747 665h1v1h-1zM761 665h1v1h-1zM772 665h1v1h-1zM780 6h1v1h-1zM820 6h1v1h-1zM890 665h1v1h-1zM894 6h1v1h-1zM927 665h1v1h-1zM935 6h1v1h-1zM936 665h1v1h-1zM940 665h1v1h-1zM963 665h1v1h-1zM990 665h1v1h-1zM996 6h1v1h-1zM1014 665h1v1h-1zM1020 6h1v1h-1zM1037 665h1v1h-1zM1066 6h1v1h-1zM1093 6h1v1h-1zM1107 665h1v1h-1zM1151 6h1v1h-1zM1197 665h1v1h-1zM1212 6h1v1h-1zM6 30h1v1h-1zM6 31h1v1h-1zM1231 53h1v1h-1zM1231 55h1v1h-1zM6 60h1v1h-1zM1231 73h1v1h-1zM1231 74h1v1h-1zM1231 149h1v1h-1zM6 170h1v1h-1zM6 197h1v1h-1zM1231 243h1v1h-1zM6 244h1v1h-1zM1231 260h1v1h-1zM1231 284h1v1h-1zM6 307h1v1h-1zM1231 335h1v1h-1zM1231 337h1v1h-1zM1231 348h1v1h-1zM6 371h1v1h-1zM6 372h1v1h-1zM6 406h1v1h-1zM1231 458h1v1h-1zM6 521h1v1h-1zM6 531h1v1h-1zM6 537h1v1h-1zM1231 543h1v1h-1zM6 559h1v1h-1zM1231 562h1v1h-1zM1231 578h1v1h-1zM6 581h1v1h-1zM6 618h1v1h-1zM1231 641h1v1h-1zM6 649h1v1h-1zM6 651h1v1h-1zM6 654h1v1h-1zM6 655h1v1h-1zM6 665h1v1h-1zM1231 667h1v1h-1zM6 668h1v1h-1z"/></svg>
</body></html>
